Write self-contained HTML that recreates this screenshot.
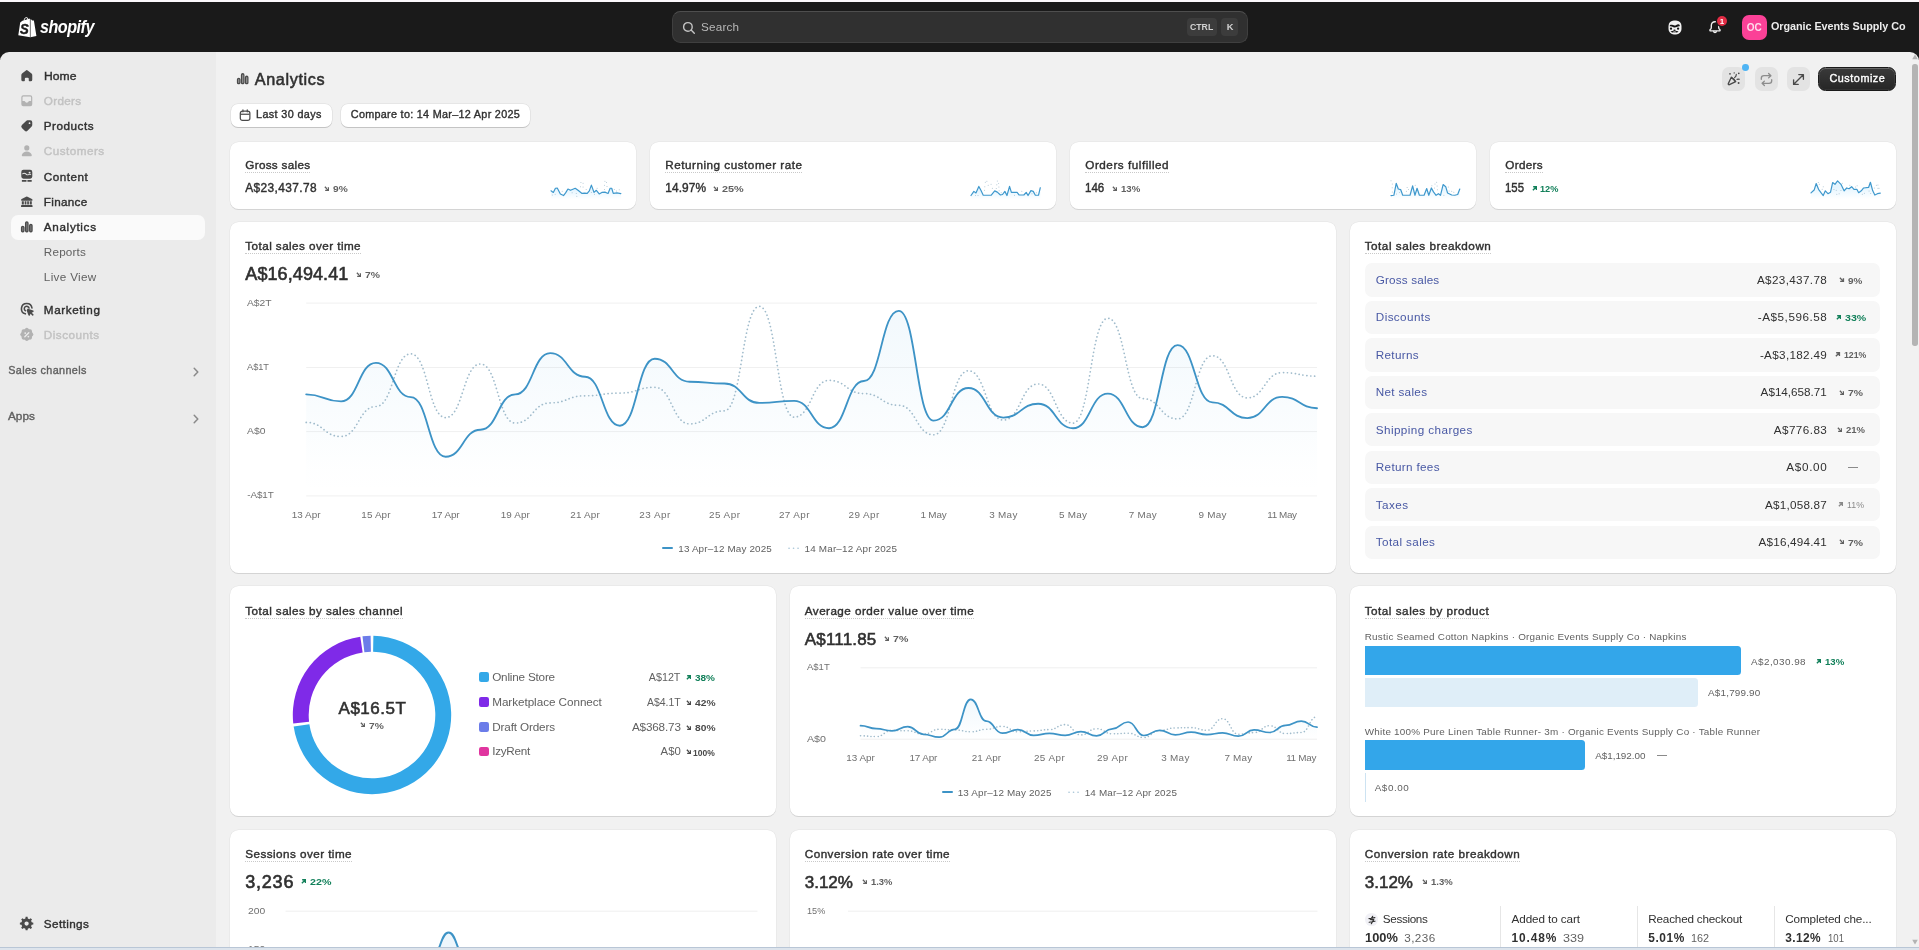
<!DOCTYPE html>
<html lang="en"><head><meta charset="utf-8"><title>Analytics · Organic Events Supply Co · Shopify</title>
<style>
html,body{margin:0;padding:0;}
body{width:1919px;height:950px;overflow:hidden;background:#f1f1f1;will-change:transform;font-family:'Liberation Sans', sans-serif;position:relative;-webkit-font-smoothing:antialiased;}
.t{position:absolute;white-space:pre;}
.card{box-shadow:0 1px 0 0 rgba(0,0,0,.13),0 0 0 0.5px rgba(0,0,0,.06);}
.ul{border-bottom:1px dotted #c9c9c9;}
</style></head>
<body>
<div style="position:absolute;left:0.00px;top:0.00px;width:1919.00px;height:2.00px;background:#fbf8fb;"></div>
<div style="position:absolute;left:0.00px;top:2.00px;width:1919.00px;height:58.00px;background:#1a1a1a;"></div>
<div style="position:absolute;left:0.00px;top:52.00px;width:216.00px;height:898.00px;background:#ebebeb;border-top-left-radius:9px;"></div>
<div style="position:absolute;left:216.00px;top:52.00px;width:1703.00px;height:898.00px;background:#f1f1f1;border-top-right-radius:9px;"></div>
<svg style="position:absolute;left:1911.00px;top:53.00px;" width="8" height="8" viewBox="0 0 8 8"><path d="M1.2 6.2 L4 1.6 L6.8 6.2Z" fill="#b3b3b3"/></svg>
<div style="position:absolute;left:1912.30px;top:64.00px;width:5.40px;height:281.50px;background:#b4b4b4;border-radius:2.7px;"></div>
<svg style="position:absolute;left:1911.00px;top:938.00px;" width="8" height="8" viewBox="0 0 8 8"><path d="M1.2 1.8 L4 6.4 L6.8 1.8Z" fill="#b3b3b3"/></svg>
<div style="position:absolute;left:11.40px;top:214.70px;width:193.30px;height:25.20px;background:#fafafa;border-radius:7.2px;"></div>
<svg style="position:absolute;left:19.20px;top:67.70px;" width="15.6" height="15.6" viewBox="0 0 20 20"><g fill="#4a4a4a"><path d="M8.9 3.1a1.8 1.8 0 0 1 2.2 0l5 3.9c.57.44.9 1.12.9 1.84V15a2 2 0 0 1-2 2h-1.6a.9.9 0 0 1-.9-.9v-2.3a1.3 1.3 0 0 0-1.3-1.3h-2.4a1.3 1.3 0 0 0-1.3 1.3v2.3a.9.9 0 0 1-.9.9H5a2 2 0 0 1-2-2V8.84c0-.72.33-1.4.9-1.84l5-3.9Z"/></g></svg>
<div class="t" style="top:68px;font-size:11.7px;line-height:15.21px;color:#303030;-webkit-text-stroke:0.4px #303030;left:43.80px;transform:scaleX(1.0389);transform-origin:0 50%;">Home</div>
<svg style="position:absolute;left:19.20px;top:92.90px;" width="15.6" height="15.6" viewBox="0 0 20 20"><g fill="#b2b2b2"><path fill-rule="evenodd" d="M5.5 3A2.5 2.5 0 0 0 3 5.5v9A2.5 2.5 0 0 0 5.5 17h9a2.5 2.5 0 0 0 2.5-2.5v-9A2.5 2.5 0 0 0 14.500 3h-9Zm-1 7.200h2.300a.8.8 0 0 1 .75.520 2.600 2.600 0 0 0 4.900 0 .8.8 0 0 1 .75-.52h2.300V5.500a1 1 0 0 0-1-1h-9a1 1 0 0 0-1 1v4.700Z"/></g></svg>
<div class="t" style="top:93px;font-size:11.7px;line-height:15.21px;color:#c2c2c2;-webkit-text-stroke:0.4px #c2c2c2;letter-spacing:0.333px;left:43.80px;">Orders</div>
<svg style="position:absolute;left:19.20px;top:118.10px;" width="15.6" height="15.6" viewBox="0 0 20 20"><g fill="#4a4a4a"><path fill-rule="evenodd" d="M10.900 3a2.500 2.500 0 0 0-1.770.730l-5.400 5.400a2.500 2.500 0 0 0 0 3.540l3.600 3.600a2.500 2.500 0 0 0 3.540 0l5.400-5.400a2.500 2.500 0 0 0 .730-1.770v-3.600a2.500 2.500 0 0 0-2.500-2.500h-3.600Zm2.600 4.700a1.100 1.100 0 1 0 0-2.200 1.100 1.100 0 0 0 0 2.200Z"/></g></svg>
<div class="t" style="top:118px;font-size:11.7px;line-height:15.21px;color:#303030;-webkit-text-stroke:0.4px #303030;letter-spacing:0.511px;left:43.80px;">Products</div>
<svg style="position:absolute;left:19.20px;top:143.00px;" width="15.6" height="15.6" viewBox="0 0 20 20"><g fill="#b2b2b2"><path d="M10 9.600a3.300 3.300 0 1 0 0-6.600 3.300 3.300 0 0 0 0 6.600Z"/><path d="M3.600 15.400c.9-2.700 3.400-4.400 6.400-4.400s5.500 1.700 6.400 4.400c.28.850-.42 1.600-1.300 1.600h-10.200c-.88 0-1.580-.750-1.300-1.600Z"/></g></svg>
<div class="t" style="top:143px;font-size:11.7px;line-height:15.21px;color:#c2c2c2;-webkit-text-stroke:0.4px #c2c2c2;letter-spacing:0.486px;left:43.80px;">Customers</div>
<svg style="position:absolute;left:19.20px;top:167.90px;" width="15.6" height="15.6" viewBox="0 0 20 20"><g fill="#4a4a4a"><path fill-rule="evenodd" d="M5.700 2.400h8.600a2.750 2.750 0 0 1 2.750 2.750v5.800a2.750 2.750 0 0 1-2.750 2.750h-8.600a2.750 2.750 0 0 1-2.750-2.750v-5.800a2.750 2.750 0 0 1 2.750-2.750Zm7.900 2.300a1.250 1.250 0 1 0 0 2.500 1.250 1.250 0 0 0 0-2.500Zm-9.300 3.500c1.500-1.300 3.100-1.200 4.400 0 1.300 1.200 2.500 1.500 3.800.9 1.100-.5 2.100-.3 3 .3v-1.300c-1-.6-2.200-.7-3.500-.1-.9.400-1.600.200-2.500-.7-1.700-1.600-3.700-1.600-5.200-.5v1.400Z"/><path d="M3.700 15.300h5.900v2.200h-5.900zM10.800 15.300h5.500v2.200h-5.500z"/></g></svg>
<div class="t" style="top:169px;font-size:11.7px;line-height:15.21px;color:#303030;-webkit-text-stroke:0.4px #303030;letter-spacing:0.51px;left:43.80px;">Content</div>
<svg style="position:absolute;left:19.20px;top:193.80px;" width="15.6" height="15.6" viewBox="0 0 20 20"><g fill="#4a4a4a"><path d="M9.100 3.500a2 2 0 0 1 1.800 0l5.700 2.900c.5.250.8.750.8 1.300v.1a.9.900 0 0 1-.9.900h-13a.9.900 0 0 1-.9-.9v-.1c0-.550.300-1.050.8-1.300l5.700-2.900Z"/><path d="M3.600 9.300h2.600v4.300h-2.600zM7.300 9.300h2.200v4.300h-2.200zM10.500 9.300h2.200v4.300h-2.200zM13.800 9.300h2.600v4.300h-2.600z"/><path d="M2.600 15.100a1 1 0 0 1 1-1h12.800a1 1 0 0 1 1 1v.8a.8.800 0 0 1-.8.800h-13.200a.8.800 0 0 1-.8-.8v-.800Z"/></g></svg>
<div class="t" style="top:194px;font-size:11.7px;line-height:15.21px;color:#303030;-webkit-text-stroke:0.4px #303030;letter-spacing:0.301px;left:43.80px;">Finance</div>
<svg style="position:absolute;left:19.20px;top:219.10px;" width="15.6" height="15.6" viewBox="0 0 20 20"><g fill="#4a4a4a"><path d="M2.450 11a2.350 2.350 0 0 1 4.700 0v4.200a2.050 2.050 0 0 1-2.050 2.050h-.6a2.050 2.050 0 0 1-2.050-2.050v-4.200ZM7.650 5.100a2.350 2.350 0 0 1 4.700 0v10.100a2.050 2.050 0 0 1-2.050 2.050h-.6a2.050 2.050 0 0 1-2.050-2.050v-10.100ZM12.850 8.300a2.350 2.350 0 0 1 4.700 0v6.900a2.050 2.050 0 0 1-2.050 2.050h-.6a2.050 2.050 0 0 1-2.050-2.050v-6.900Z"/><path fill="#777" d="M3.950 11.200a.85.850 0 0 1 1.700 0v3.900a.6.600 0 0 1-.6.600h-.5a.6.600 0 0 1-.6-.6v-3.900ZM9.150 5.300a.85.850 0 0 1 1.700 0v9.800a.6.600 0 0 1-.6.600h-.5a.6.600 0 0 1-.6-.6v-9.800ZM14.350 8.500a.85.850 0 0 1 1.700 0v6.600a.6.600 0 0 1-.6.600h-.5a.6.600 0 0 1-.6-.6v-6.600Z"/></g></svg>
<div class="t" style="top:219px;font-size:11.7px;line-height:15.21px;color:#303030;-webkit-text-stroke:0.4px #303030;letter-spacing:0.677px;left:43.80px;">Analytics</div>
<div class="t" style="top:244px;font-size:11.7px;line-height:15.21px;color:#616161;letter-spacing:0.194px;left:43.80px;">Reports</div>
<div class="t" style="top:269px;font-size:11.7px;line-height:15.21px;color:#616161;letter-spacing:0.336px;left:43.80px;">Live View</div>
<svg style="position:absolute;left:18.60px;top:301.30px;" width="16.8" height="16.8" viewBox="0 0 20 20"><g fill="#4a4a4a"><path d="M7.57 15.29 A6.3 6.3 0 1 1 15.44 8.32" fill="none" stroke="#4a4a4a" stroke-width="1.900" stroke-linecap="round"/><path d="M7.54 11.58 A2.9 2.9 0 1 1 12.00 8.45" fill="none" stroke="#4a4a4a" stroke-width="1.800" stroke-linecap="round"/><path d="M9.700 10.300c-.25-.7.420-1.370 1.120-1.120l6.100 2.200c.75.270.8 1.300.08 1.640l-1.900.9 2 2a.8.800 0 0 1 0 1.130l-.2.200a.8.800 0 0 1-1.130 0l-2-2-.9 1.900c-.34.720-1.370.670-1.640-.08l-2.200-6.100Z" fill="#4a4a4a"/></g></svg>
<div class="t" style="top:302px;font-size:11.7px;line-height:15.21px;color:#303030;-webkit-text-stroke:0.4px #303030;letter-spacing:0.596px;left:43.80px;">Marketing</div>
<svg style="position:absolute;left:18.20px;top:326.10px;" width="17.6" height="17.6" viewBox="0 0 20 20"><g fill="#b2b2b2"><path fill-rule="evenodd" d="M8.300 2.900a2.300 2.300 0 0 1 3.400 0l.42.460c.2.220.48.340.78.320l.62-.03a2.300 2.300 0 0 1 2.400 2.400l-.03.620c-.02.300.1.580.32.780l.46.420a2.300 2.300 0 0 1 0 3.400l-.46.420c-.22.200-.34.480-.32.780l.03.620a2.300 2.300 0 0 1-2.400 2.400l-.62-.03a1 1 0 0 0-.78.320l-.42.460a2.300 2.300 0 0 1-3.400 0l-.42-.460a1 1 0 0 0-.78-.320l-.62.030a2.300 2.300 0 0 1-2.400-2.400l.03-.620a1 1 0 0 0-.32-.780l-.46-.420a2.300 2.300 0 0 1 0-3.400l.46-.420a1 1 0 0 0 .32-.780l-.03-.620a2.300 2.300 0 0 1 2.400-2.400l.62.030c.3.020.58-.1.780-.320l.42-.460Zm4.500 4.300a.8.800 0 0 1 0 1.130l-4.470 4.470a.8.800 0 0 1-1.130-1.130l4.470-4.470a.8.800 0 0 1 1.130 0Zm-4.600 1.800a1 1 0 1 0 0-2 1 1 0 0 0 0 2Zm3.600 4a1 1 0 1 0 0-2 1 1 0 0 0 0 2Z"/></g></svg>
<div class="t" style="top:327px;font-size:11.7px;line-height:15.21px;color:#c2c2c2;-webkit-text-stroke:0.4px #c2c2c2;letter-spacing:0.496px;left:43.80px;">Discounts</div>
<div class="t" style="top:363px;font-size:10.8px;line-height:14.04px;color:#616161;-webkit-text-stroke:0.37px #616161;letter-spacing:0.382px;left:8.20px;">Sales channels</div>
<div class="t" style="top:409px;font-size:10.8px;line-height:14.04px;color:#616161;-webkit-text-stroke:0.37px #616161;left:8.20px;transform:scaleX(1.0890);transform-origin:0 50%;">Apps</div>
<svg style="position:absolute;left:190.00px;top:366.10px;" width="12" height="12" viewBox="0 0 12 12"><path d="M4.200 2.200 L7.800 6 L4.200 9.800" fill="none" stroke="#8a8a8a" stroke-width="1.500" stroke-linecap="round" stroke-linejoin="round"/></svg>
<svg style="position:absolute;left:190.00px;top:413.20px;" width="12" height="12" viewBox="0 0 12 12"><path d="M4.200 2.200 L7.800 6 L4.200 9.800" fill="none" stroke="#8a8a8a" stroke-width="1.500" stroke-linecap="round" stroke-linejoin="round"/></svg>
<svg style="position:absolute;left:18.40px;top:914.80px;" width="17.2" height="17.2" viewBox="0 0 20 20"><g fill="#4a4a4a"><path fill-rule="evenodd" stroke-linejoin="round" d="M8.58 4.07 L8.89 2.18 L11.11 2.18 L11.42 4.07 L13.19 4.80 L14.74 3.68 L16.32 5.26 L15.20 6.81 L15.93 8.58 L17.82 8.89 L17.82 11.11 L15.93 11.42 L15.20 13.19 L16.32 14.74 L14.74 16.32 L13.19 15.20 L11.42 15.93 L11.11 17.82 L8.89 17.82 L8.58 15.93 L6.81 15.20 L5.26 16.32 L3.68 14.74 L4.80 13.19 L4.07 11.42 L2.18 11.11 L2.18 8.89 L4.07 8.58 L4.80 6.81 L3.68 5.26 L5.26 3.68 L6.81 4.80Z M7.50 10.00 a2.5 2.5 0 1 0 5.0 0 a2.5 2.5 0 1 0 -5.0 0Z"/></g></svg>
<div class="t" style="top:916px;font-size:11.7px;line-height:15.21px;color:#303030;-webkit-text-stroke:0.4px #303030;letter-spacing:0.395px;left:43.80px;">Settings</div>
<svg style="position:absolute;left:17.00px;top:14.50px;" width="21" height="24" viewBox="0 0 21 24"><path d="M3.2 7.600 L5.400 5.800 L6.600 5.500 C6.900 3.800 7.900 2.300 9.400 2.300 C10.300 2.300 10.900 2.900 11.200 3.900 L12.400 3.600 L13.300 4.400 L13.300 22.300 L1.300 20.300 Z" fill="#fff"/><path d="M13.300 4.400 L14.300 4.500 L15.200 5.400 L16.900 5.600 L19.400 20.900 L13.300 22.300 Z" fill="#fff"/><path d="M13.300 4.400 L13.300 22.300" stroke="#1a1a1a" stroke-width=".5"/><path d="M7.400 5.300 C7.600 4.200 8.400 3.100 9.300 3.100 C9.800 3.100 10.200 3.500 10.400 4.200 Z" fill="#1a1a1a"/><text x="0" y="0" font-family="Liberation Sans, sans-serif" font-weight="700" font-style="italic" font-size="14.600" fill="#1a1a1a" stroke="#1a1a1a" stroke-width=".45" transform="translate(3.100,18.500) scale(.9,1)">S</text></svg>
<div class="t" style="top:15px;font-size:18.6px;line-height:24.18px;color:#fff;font-weight:700;letter-spacing:-0.6px;font-style:italic;left:40.30px;transform:scaleX(.87);transform-origin:0 0;">shopify</div>
<div style="position:absolute;left:672.00px;top:11.00px;width:575.80px;height:32.00px;background:#303030;border-radius:8.5px;box-sizing:border-box;border:1px solid #3f3f3f;border-top-color:#4e4e4e;"></div>
<svg style="position:absolute;left:682.00px;top:20.50px;" width="14" height="14" viewBox="0 0 14 14"><circle cx="5.900" cy="5.900" r="4.300" fill="none" stroke="#c4c4c4" stroke-width="1.400"/><path d="M9.100 9.100 L12.300 12.300" stroke="#c4c4c4" stroke-width="1.400" stroke-linecap="round"/></svg>
<div class="t" style="top:19px;font-size:11.7px;line-height:15.21px;color:#b8b8b8;letter-spacing:0.2px;left:701.00px;">Search</div>
<div style="position:absolute;left:1186.90px;top:18.10px;width:29.70px;height:17.50px;background:#3c3c3c;border-radius:4px;"></div>
<div class="t" style="top:21px;font-size:9.3px;line-height:12.09px;color:#d2d2d2;font-weight:700;left:1190.40px;transform:scaleX(0.9356);transform-origin:0 50%;">CTRL</div>
<div style="position:absolute;left:1220.90px;top:18.10px;width:17.50px;height:17.50px;background:#3c3c3c;border-radius:4px;"></div>
<div class="t" style="top:21px;font-size:9.3px;line-height:12.09px;color:#d2d2d2;font-weight:700;left:1226.70px;">K</div>
<svg style="position:absolute;left:1668.00px;top:19.50px;" width="14.2" height="15" viewBox="0 0 14.2 15"><rect x=".5" y=".4" width="13" height="14.100" rx="5.400" ry="5.600" fill="#f2f2f2"/><path d="M1.800 5.200 C3.900 3.800 5.800 6.300 7.900 5.200 C9.400 4.400 10.600 3.800 11.700 4.900 L11.700 6.300 C9.700 5.900 8.200 7.800 6.400 7.500 C4.500 7.200 3.500 5.700 1.800 6.400Z" fill="#161616"/><circle cx="3" cy="8.700" r="1.150" fill="#161616"/><circle cx="10.100" cy="8.700" r="1.150" fill="#161616"/><ellipse cx="6.500" cy="10.200" rx="1.150" ry=".75" fill="#161616"/><path d="M2.500 11.500 C4.300 10.600 8.700 10.600 10.600 11.500 C9.300 13.100 4 13.100 2.500 11.500Z" fill="#161616"/><rect x="5.200" y="11.550" width="2.700" height="1.050" rx=".4" fill="#f2f2f2"/></svg>
<svg style="position:absolute;left:1707.80px;top:20.30px;" width="14" height="14" viewBox="0 0 14 14"><path d="M7 1.700 C4.700 1.700 3.300 3.400 3.300 5.600 L3.300 7.400 C3.300 8.300 2.900 9 2.200 9.600 C1.600 10.100 1.900 10.900 2.700 10.900 L11.300 10.900 C12.100 10.900 12.400 10.100 11.800 9.600 C11.100 9 10.700 8.300 10.700 7.400 L10.700 5.600 C10.700 3.400 9.300 1.700 7 1.700Z" fill="none" stroke="#f1f1f1" stroke-width="1.350" stroke-linejoin="round"/><path d="M5.700 11.300 C5.700 12.900 8.300 12.900 8.300 11.300" fill="none" stroke="#f1f1f1" stroke-width="1.350" stroke-linecap="round"/></svg>
<div style="position:absolute;left:1716.50px;top:15.80px;width:10.60px;height:10.60px;background:#e22c45;border-radius:5.3px;box-shadow:0 0 0 1.200px #1a1a1a;"></div>
<div class="t" style="top:17px;font-size:8px;line-height:10.4px;color:#fff;font-weight:700;left:1719.70px;">1</div>
<div style="position:absolute;left:1742.20px;top:14.90px;width:24.80px;height:25.00px;background:#fb4197;border-radius:7px;"></div>
<div class="t" style="top:21px;font-size:10px;line-height:13.0px;color:#ffdcec;font-weight:700;left:1746.80px;transform:scaleX(1.0000);transform-origin:0 50%;">OC</div>
<div class="t" style="top:19px;font-size:10.8px;line-height:14.04px;color:#ececec;font-weight:700;letter-spacing:-0.048px;left:1771.00px;">Organic Events Supply Co</div>
<svg style="position:absolute;left:235.25px;top:71.30px;" width="15.4" height="15.4" viewBox="0 0 20 20"><g fill="#4a4a4a"><path d="M2.450 11a2.350 2.350 0 0 1 4.700 0v4.200a2.050 2.050 0 0 1-2.050 2.050h-.6a2.050 2.050 0 0 1-2.050-2.050v-4.200ZM7.650 5.100a2.350 2.350 0 0 1 4.700 0v10.100a2.050 2.050 0 0 1-2.050 2.050h-.6a2.050 2.050 0 0 1-2.050-2.050v-10.100ZM12.850 8.300a2.350 2.350 0 0 1 4.700 0v6.900a2.050 2.050 0 0 1-2.050 2.050h-.6a2.050 2.050 0 0 1-2.050-2.050v-6.900Z"/><path fill="#8f8f8f" d="M3.950 11.200a.85.850 0 0 1 1.700 0v3.900a.6.600 0 0 1-.6.600h-.5a.6.600 0 0 1-.6-.6v-3.900ZM9.150 5.300a.85.850 0 0 1 1.700 0v9.800a.6.600 0 0 1-.6.600h-.5a.6.600 0 0 1-.6-.6v-9.800ZM14.350 8.500a.85.850 0 0 1 1.700 0v6.600a.6.600 0 0 1-.6.600h-.5a.6.600 0 0 1-.6-.6v-6.600Z"/></g></svg>
<div class="t" style="top:69px;font-size:16.2px;line-height:21.06px;color:#303030;-webkit-text-stroke:0.55px #303030;letter-spacing:0.652px;left:254.70px;">Analytics</div>
<div style="position:absolute;left:231.00px;top:104.30px;width:101.30px;height:22.80px;background:#fff;border-radius:7px;box-shadow:0 1px 0 0 #c4c4c4,0 0 0 .6px #dcdcdc;"></div>
<svg style="position:absolute;left:238.80px;top:108.90px;" width="12.2" height="12.2" viewBox="0 0 13 13"><rect x="1.400" y="2.300" width="10.200" height="9.800" rx="2.300" fill="none" stroke="#4a4a4a" stroke-width="1.300"/><path d="M1.600 5.600 H11.400" stroke="#4a4a4a" stroke-width="1.300"/><path d="M4.200 1 V3 M8.800 1 V3" stroke="#4a4a4a" stroke-width="1.300" stroke-linecap="round"/></svg>
<div class="t" style="top:107px;font-size:10.8px;line-height:14.04px;color:#303030;-webkit-text-stroke:0.37px #303030;letter-spacing:0.379px;left:256.00px;">Last 30 days</div>
<div style="position:absolute;left:340.80px;top:104.30px;width:189.60px;height:22.80px;background:#fff;border-radius:7px;box-shadow:0 1px 0 0 #c4c4c4,0 0 0 .6px #dcdcdc;"></div>
<div class="t" style="top:107px;font-size:10.8px;line-height:14.04px;color:#303030;-webkit-text-stroke:0.37px #303030;letter-spacing:0.301px;left:350.80px;">Compare to: 14 Mar–12 Apr 2025</div>
<div style="position:absolute;left:1721.70px;top:67.20px;width:23.70px;height:23.60px;background:#e3e3e3;border-radius:7px;"></div>
<div style="position:absolute;left:1754.80px;top:67.20px;width:23.70px;height:23.60px;background:#e3e3e3;border-radius:7px;"></div>
<div style="position:absolute;left:1786.60px;top:67.20px;width:23.70px;height:23.60px;background:#e3e3e3;border-radius:7px;"></div>
<svg style="position:absolute;left:1726.10px;top:71.20px;" width="16" height="16" viewBox="0 0 16 16"><path d="M5.300 6.300 L2.300 12.600 C2 13.300 2.700 14 3.400 13.700 L9.700 10.700 Z" fill="none" stroke="#4a4a4a" stroke-width="1.300" stroke-linejoin="round"/><path d="M5.300 6.300 C7 7 9 9 9.700 10.700" fill="none" stroke="#4a4a4a" stroke-width="1.300"/><circle cx="4" cy="2.800" r=".85" fill="#4a4a4a"/><circle cx="8.200" cy="1.900" r=".7" fill="#4a4a4a"/><circle cx="12.800" cy="2.300" r=".85" fill="#4a4a4a"/><circle cx="13" cy="8.200" r=".8" fill="#4a4a4a"/><circle cx="12.600" cy="12" r=".95" fill="#4a4a4a"/><path d="M8.600 6.600 C9.600 5.800 10.300 4.800 10.300 3.400" fill="none" stroke="#4a4a4a" stroke-width="1.200" stroke-linecap="round"/><path d="M11 8.300 L12.200 8.200" fill="none" stroke="#4a4a4a" stroke-width="1.200" stroke-linecap="round"/></svg>
<div style="position:absolute;left:1742.00px;top:64.20px;width:6.80px;height:6.80px;background:#4fb4f4;border-radius:3.4px;"></div>
<svg style="position:absolute;left:1759.20px;top:71.50px;" width="15" height="15" viewBox="0 0 15 15"><path d="M2.300 7.300 V6.300 C2.300 4.800 3.500 3.700 5 3.700 H11.600 M9.600 1.500 L11.900 3.700 L9.600 5.900" fill="none" stroke="#8c8c8c" stroke-width="1.300" stroke-linecap="round" stroke-linejoin="round"/><path d="M12.700 7.700 V8.700 C12.700 10.200 11.500 11.300 10 11.300 H3.400 M5.400 9.100 L3.100 11.300 L5.400 13.500" fill="none" stroke="#8c8c8c" stroke-width="1.300" stroke-linecap="round" stroke-linejoin="round"/></svg>
<svg style="position:absolute;left:1790.90px;top:71.50px;" width="15" height="15" viewBox="0 0 15 15"><path d="M3 12 L12 3 M7.800 2.600 H12.400 V7.200 M7.200 12.400 H2.600 V7.800" fill="none" stroke="#4a4a4a" stroke-width="1.350" stroke-linecap="round" stroke-linejoin="round"/></svg>
<div style="position:absolute;left:1817.90px;top:67.20px;width:78.10px;height:24.00px;background:#303030;border-radius:7.5px;box-sizing:border-box;border:1px solid #1a1a1a;box-shadow:inset 0 1px 0 0 rgba(255,255,255,.18),inset 0 0 0 1px rgba(255,255,255,.06);background:linear-gradient(#3a3a3a,#262626);"></div>
<div class="t" style="top:71px;font-size:10.8px;line-height:14.04px;color:#fff;-webkit-text-stroke:0.37px #fff;letter-spacing:0.536px;left:1829.50px;">Customize</div>
<div style="position:absolute;left:230.00px;top:141.70px;width:406.00px;height:67.50px;background:#fff;border-radius:8.6px;box-shadow:0 1px 0 0 #d4d4d4,0 0 0 .5px #e3e3e3;"></div>
<div class="t" style="top:157px;font-size:11.7px;line-height:15.21px;color:#303030;-webkit-text-stroke:0.4px #303030;letter-spacing:0.31px;left:245.30px;">Gross sales</div>
<div style="position:absolute;left:245.30px;top:171.80px;width:64.80px;height:1.00px;border-bottom:1px dotted #c9c9c9;height:0;"></div>
<div class="t" style="top:181px;font-size:11.9px;line-height:15.47px;color:#303030;-webkit-text-stroke:0.4px #303030;letter-spacing:0.385px;left:245.30px;">A$23,437.78</div>
<svg style="position:absolute;left:323.80px;top:185.90px;" width="5.2" height="5.2" viewBox="0 0 5.4 5.4"><path d="M.9 .9 L4.300 4.300 M1.200 4.600 H4.600 V1.200" fill="none" stroke="#616161" stroke-width="1.450" stroke-linejoin="miter"/></svg>
<div class="t" style="top:183px;font-size:9.6px;line-height:12.48px;color:#616161;font-weight:700;left:332.70px;transform:scaleX(1.0595);transform-origin:0 50%;">9%</div>
<svg style="position:absolute;left:549.20px;top:170.00px;" width="73.83" height="35" viewBox="0 0 73.83 35"><defs><linearGradient id="sg540" x1="0" y1="0" x2="0" y2="1"><stop offset="0.35" stop-color="#7fd0ff" stop-opacity=".2"/><stop offset=".95" stop-color="#7fd0ff" stop-opacity="0"/></linearGradient></defs><path d="M2.00 20.84 L4.34 22.41 L6.43 18.24 L8.25 17.98 L11.38 23.97 L14.51 25.53 L16.59 22.93 L18.94 19.02 L21.54 20.32 L26.23 18.24 L29.36 20.58 L33.01 23.45 L35.61 23.19 L38.22 23.45 L40.30 20.84 L42.39 15.11 L44.99 22.41 L47.34 20.32 L50.20 23.97 L52.81 22.41 L55.93 22.15 L59.06 23.45 L61.15 18.24 L62.71 18.24 L64.27 23.45 L67.92 22.93 L71.83 23.71 L71.83 30 L2.00 30 Z" fill="url(#sg540)"/><circle cx="31.96" cy="12.51" r=".5" fill="#9ab6c8" fill-opacity=".85"/><circle cx="34.05" cy="13.29" r=".5" fill="#9ab6c8" fill-opacity=".85"/><circle cx="31.44" cy="16.68" r=".5" fill="#9ab6c8" fill-opacity=".85"/><circle cx="34.05" cy="16.94" r=".5" fill="#9ab6c8" fill-opacity=".85"/><circle cx="37.17" cy="19.54" r=".5" fill="#9ab6c8" fill-opacity=".85"/><circle cx="23.10" cy="22.67" r=".5" fill="#9ab6c8" fill-opacity=".85"/><circle cx="27.27" cy="23.45" r=".5" fill="#9ab6c8" fill-opacity=".85"/><circle cx="55.93" cy="11.20" r=".5" fill="#9ab6c8" fill-opacity=".85"/><circle cx="57.50" cy="12.51" r=".5" fill="#9ab6c8" fill-opacity=".85"/><circle cx="55.41" cy="15.37" r=".5" fill="#9ab6c8" fill-opacity=".85"/><circle cx="58.02" cy="16.41" r=".5" fill="#9ab6c8" fill-opacity=".85"/><circle cx="55.41" cy="19.54" r=".5" fill="#9ab6c8" fill-opacity=".85"/><circle cx="48.12" cy="18.24" r=".5" fill="#9ab6c8" fill-opacity=".85"/><circle cx="65.31" cy="19.54" r=".5" fill="#9ab6c8" fill-opacity=".85"/><circle cx="67.40" cy="21.10" r=".5" fill="#9ab6c8" fill-opacity=".85"/><circle cx="70.26" cy="19.80" r=".5" fill="#9ab6c8" fill-opacity=".85"/><circle cx="3.30" cy="25.01" r=".5" fill="#9ab6c8" fill-opacity=".85"/><circle cx="6.17" cy="24.23" r=".5" fill="#9ab6c8" fill-opacity=".85"/><circle cx="13.20" cy="21.37" r=".5" fill="#9ab6c8" fill-opacity=".85"/><circle cx="45.51" cy="24.23" r=".5" fill="#9ab6c8" fill-opacity=".85"/><circle cx="42.39" cy="22.41" r=".5" fill="#9ab6c8" fill-opacity=".85"/><circle cx="27.79" cy="26.32" r=".5" fill="#9ab6c8" fill-opacity=".85"/><path d="M2.00 20.84 L4.34 22.41 L6.43 18.24 L8.25 17.98 L11.38 23.97 L14.51 25.53 L16.59 22.93 L18.94 19.02 L21.54 20.32 L26.23 18.24 L29.36 20.58 L33.01 23.45 L35.61 23.19 L38.22 23.45 L40.30 20.84 L42.39 15.11 L44.99 22.41 L47.34 20.32 L50.20 23.97 L52.81 22.41 L55.93 22.15 L59.06 23.45 L61.15 18.24 L62.71 18.24 L64.27 23.45 L67.92 22.93 L71.83 23.71" fill="none" stroke="#3e98cd" stroke-width="1.200" stroke-linejoin="round" stroke-linecap="round"/></svg>
<div style="position:absolute;left:650.00px;top:141.70px;width:406.00px;height:67.50px;background:#fff;border-radius:8.6px;box-shadow:0 1px 0 0 #d4d4d4,0 0 0 .5px #e3e3e3;"></div>
<div class="t" style="top:157px;font-size:11.7px;line-height:15.21px;color:#303030;-webkit-text-stroke:0.4px #303030;letter-spacing:0.515px;left:665.30px;">Returning customer rate</div>
<div style="position:absolute;left:665.30px;top:171.80px;width:136.70px;height:1.00px;border-bottom:1px dotted #c9c9c9;height:0;"></div>
<div class="t" style="top:181px;font-size:11.9px;line-height:15.47px;color:#303030;-webkit-text-stroke:0.4px #303030;letter-spacing:0.071px;left:665.30px;">14.97%</div>
<svg style="position:absolute;left:713.20px;top:185.90px;" width="5.2" height="5.2" viewBox="0 0 5.4 5.4"><path d="M.9 .9 L4.300 4.300 M1.200 4.600 H4.600 V1.200" fill="none" stroke="#616161" stroke-width="1.450" stroke-linejoin="miter"/></svg>
<div class="t" style="top:183px;font-size:9.6px;line-height:12.48px;color:#616161;font-weight:700;left:722.10px;transform:scaleX(1.1300);transform-origin:0 50%;">25%</div>
<svg style="position:absolute;left:969.20px;top:170.00px;" width="73.31" height="35" viewBox="0 0 73.31 35"><defs><linearGradient id="sg960" x1="0" y1="0" x2="0" y2="1"><stop offset="0.35" stop-color="#7fd0ff" stop-opacity=".2"/><stop offset=".95" stop-color="#7fd0ff" stop-opacity="0"/></linearGradient></defs><path d="M2.00 25.53 L4.87 21.37 L6.95 22.93 L9.82 16.41 L11.90 20.32 L14.25 25.27 L22.06 25.27 L25.71 20.84 L28.32 22.15 L31.44 25.01 L33.53 24.49 L35.87 21.37 L37.96 25.53 L40.56 16.41 L42.39 22.41 L48.12 22.41 L50.20 25.01 L54.89 25.01 L57.24 22.41 L59.06 25.53 L61.93 20.58 L64.27 21.37 L66.36 25.27 L69.48 25.27 L71.31 17.72 L71.31 30 L2.00 30 Z" fill="url(#sg960)"/><circle cx="16.33" cy="12.25" r=".5" fill="#9ab6c8" fill-opacity=".85"/><circle cx="17.89" cy="11.20" r=".5" fill="#9ab6c8" fill-opacity=".85"/><circle cx="19.20" cy="15.37" r=".5" fill="#9ab6c8" fill-opacity=".85"/><circle cx="22.06" cy="14.33" r=".5" fill="#9ab6c8" fill-opacity=".85"/><circle cx="15.81" cy="16.68" r=".5" fill="#9ab6c8" fill-opacity=".85"/><circle cx="15.55" cy="20.32" r=".5" fill="#9ab6c8" fill-opacity=".85"/><circle cx="23.37" cy="18.24" r=".5" fill="#9ab6c8" fill-opacity=".85"/><circle cx="28.32" cy="10.94" r=".5" fill="#9ab6c8" fill-opacity=".85"/><circle cx="29.62" cy="13.55" r=".5" fill="#9ab6c8" fill-opacity=".85"/><circle cx="27.79" cy="14.85" r=".5" fill="#9ab6c8" fill-opacity=".85"/><circle cx="29.88" cy="16.94" r=".5" fill="#9ab6c8" fill-opacity=".85"/><circle cx="27.27" cy="18.50" r=".5" fill="#9ab6c8" fill-opacity=".85"/><circle cx="30.14" cy="20.84" r=".5" fill="#9ab6c8" fill-opacity=".85"/><circle cx="52.81" cy="21.37" r=".5" fill="#9ab6c8" fill-opacity=".85"/><circle cx="45.51" cy="25.27" r=".5" fill="#9ab6c8" fill-opacity=".85"/><circle cx="32.22" cy="22.67" r=".5" fill="#9ab6c8" fill-opacity=".85"/><circle cx="62.97" cy="23.71" r=".5" fill="#9ab6c8" fill-opacity=".85"/><circle cx="67.40" cy="22.67" r=".5" fill="#9ab6c8" fill-opacity=".85"/><circle cx="6.43" cy="25.53" r=".5" fill="#9ab6c8" fill-opacity=".85"/><circle cx="9.03" cy="25.53" r=".5" fill="#9ab6c8" fill-opacity=".85"/><path d="M2.00 25.53 L4.87 21.37 L6.95 22.93 L9.82 16.41 L11.90 20.32 L14.25 25.27 L22.06 25.27 L25.71 20.84 L28.32 22.15 L31.44 25.01 L33.53 24.49 L35.87 21.37 L37.96 25.53 L40.56 16.41 L42.39 22.41 L48.12 22.41 L50.20 25.01 L54.89 25.01 L57.24 22.41 L59.06 25.53 L61.93 20.58 L64.27 21.37 L66.36 25.27 L69.48 25.27 L71.31 17.72" fill="none" stroke="#3e98cd" stroke-width="1.200" stroke-linejoin="round" stroke-linecap="round"/></svg>
<div style="position:absolute;left:1070.00px;top:141.70px;width:406.00px;height:67.50px;background:#fff;border-radius:8.6px;box-shadow:0 1px 0 0 #d4d4d4,0 0 0 .5px #e3e3e3;"></div>
<div class="t" style="top:157px;font-size:11.7px;line-height:15.21px;color:#303030;-webkit-text-stroke:0.4px #303030;letter-spacing:0.529px;left:1085.30px;">Orders fulfilled</div>
<div style="position:absolute;left:1085.30px;top:171.80px;width:83.30px;height:1.00px;border-bottom:1px dotted #c9c9c9;height:0;"></div>
<div class="t" style="top:181px;font-size:11.9px;line-height:15.47px;color:#303030;-webkit-text-stroke:0.4px #303030;left:1085.30px;transform:scaleX(0.9726);transform-origin:0 50%;">146</div>
<svg style="position:absolute;left:1111.80px;top:185.90px;" width="5.2" height="5.2" viewBox="0 0 5.4 5.4"><path d="M.9 .9 L4.300 4.300 M1.200 4.600 H4.600 V1.200" fill="none" stroke="#616161" stroke-width="1.450" stroke-linejoin="miter"/></svg>
<div class="t" style="top:183px;font-size:9.6px;line-height:12.48px;color:#616161;font-weight:700;left:1120.70px;transform:scaleX(1.0050);transform-origin:0 50%;">13%</div>
<svg style="position:absolute;left:1389.20px;top:170.00px;" width="72.79" height="35" viewBox="0 0 72.79 35"><defs><linearGradient id="sg1380" x1="0" y1="0" x2="0" y2="1"><stop offset="0.35" stop-color="#7fd0ff" stop-opacity=".2"/><stop offset=".95" stop-color="#7fd0ff" stop-opacity="0"/></linearGradient></defs><path d="M2.00 25.53 L4.87 25.27 L7.21 13.29 L9.30 19.02 L11.64 19.54 L13.72 25.27 L21.02 25.27 L23.63 15.89 L25.97 25.27 L28.06 18.24 L30.40 25.27 L35.09 25.27 L37.70 18.50 L39.78 25.27 L42.39 17.98 L44.47 21.89 L47.08 25.27 L49.42 23.71 L51.50 25.27 L54.11 14.59 L56.72 16.68 L58.54 22.93 L62.71 25.01 L65.84 25.27 L68.70 24.49 L70.79 19.02 L70.79 30 L2.00 30 Z" fill="url(#sg1380)"/><circle cx="2.00" cy="10.68" r=".5" fill="#9ab6c8" fill-opacity=".85"/><circle cx="3.30" cy="14.07" r=".5" fill="#9ab6c8" fill-opacity=".85"/><circle cx="3.20" cy="17.72" r=".5" fill="#9ab6c8" fill-opacity=".85"/><circle cx="3.30" cy="21.89" r=".5" fill="#9ab6c8" fill-opacity=".85"/><circle cx="18.15" cy="17.46" r=".5" fill="#9ab6c8" fill-opacity=".85"/><circle cx="19.46" cy="19.54" r=".5" fill="#9ab6c8" fill-opacity=".85"/><circle cx="17.37" cy="21.37" r=".5" fill="#9ab6c8" fill-opacity=".85"/><circle cx="26.23" cy="15.37" r=".5" fill="#9ab6c8" fill-opacity=".85"/><circle cx="47.60" cy="12.25" r=".5" fill="#9ab6c8" fill-opacity=".85"/><circle cx="46.03" cy="14.07" r=".5" fill="#9ab6c8" fill-opacity=".85"/><circle cx="42.91" cy="15.63" r=".5" fill="#9ab6c8" fill-opacity=".85"/><circle cx="48.12" cy="15.89" r=".5" fill="#9ab6c8" fill-opacity=".85"/><circle cx="45.51" cy="17.98" r=".5" fill="#9ab6c8" fill-opacity=".85"/><circle cx="48.38" cy="19.80" r=".5" fill="#9ab6c8" fill-opacity=".85"/><circle cx="59.32" cy="16.94" r=".5" fill="#9ab6c8" fill-opacity=".85"/><circle cx="60.10" cy="21.10" r=".5" fill="#9ab6c8" fill-opacity=".85"/><circle cx="62.71" cy="21.37" r=".5" fill="#9ab6c8" fill-opacity=".85"/><circle cx="64.79" cy="22.15" r=".5" fill="#9ab6c8" fill-opacity=".85"/><circle cx="7.47" cy="23.97" r=".5" fill="#9ab6c8" fill-opacity=".85"/><circle cx="10.60" cy="22.41" r=".5" fill="#9ab6c8" fill-opacity=".85"/><circle cx="54.89" cy="25.27" r=".5" fill="#9ab6c8" fill-opacity=".85"/><path d="M2.00 25.53 L4.87 25.27 L7.21 13.29 L9.30 19.02 L11.64 19.54 L13.72 25.27 L21.02 25.27 L23.63 15.89 L25.97 25.27 L28.06 18.24 L30.40 25.27 L35.09 25.27 L37.70 18.50 L39.78 25.27 L42.39 17.98 L44.47 21.89 L47.08 25.27 L49.42 23.71 L51.50 25.27 L54.11 14.59 L56.72 16.68 L58.54 22.93 L62.71 25.01 L65.84 25.27 L68.70 24.49 L70.79 19.02" fill="none" stroke="#3e98cd" stroke-width="1.200" stroke-linejoin="round" stroke-linecap="round"/></svg>
<div style="position:absolute;left:1490.00px;top:141.70px;width:406.00px;height:67.50px;background:#fff;border-radius:8.6px;box-shadow:0 1px 0 0 #d4d4d4,0 0 0 .5px #e3e3e3;"></div>
<div class="t" style="top:157px;font-size:11.7px;line-height:15.21px;color:#303030;-webkit-text-stroke:0.4px #303030;letter-spacing:0.333px;left:1505.30px;">Orders</div>
<div style="position:absolute;left:1505.30px;top:171.80px;width:37.40px;height:1.00px;border-bottom:1px dotted #c9c9c9;height:0;"></div>
<div class="t" style="top:181px;font-size:11.9px;line-height:15.47px;color:#303030;-webkit-text-stroke:0.4px #303030;left:1505.30px;transform:scaleX(0.9575);transform-origin:0 50%;">155</div>
<svg style="position:absolute;left:1531.50px;top:185.90px;" width="5.2" height="5.2" viewBox="0 0 5.4 5.4"><path d="M.9 4.500 L4.300 1.100 M1.200 .800 H4.600 V4.200" fill="none" stroke="#12805a" stroke-width="1.450" stroke-linejoin="miter"/></svg>
<div class="t" style="top:183px;font-size:9.6px;line-height:12.48px;color:#12805a;font-weight:700;left:1540.40px;transform:scaleX(0.9582);transform-origin:0 50%;">12%</div>
<svg style="position:absolute;left:1809.20px;top:170.00px;" width="73.31" height="35" viewBox="0 0 73.31 35"><defs><linearGradient id="sg1800" x1="0" y1="0" x2="0" y2="1"><stop offset="0.35" stop-color="#7fd0ff" stop-opacity=".2"/><stop offset=".95" stop-color="#7fd0ff" stop-opacity="0"/></linearGradient></defs><path d="M2.00 22.93 L5.13 20.06 L7.21 13.55 L9.56 19.28 L12.16 22.93 L14.25 25.53 L16.33 20.84 L18.94 23.71 L21.54 22.15 L23.63 12.51 L25.97 14.33 L28.58 10.94 L31.96 14.33 L35.09 20.84 L37.70 17.98 L40.04 18.76 L42.65 16.68 L44.99 19.28 L47.86 19.28 L49.68 22.67 L52.29 20.84 L54.63 17.98 L59.58 17.46 L61.41 12.25 L63.75 20.84 L65.84 25.01 L68.44 23.71 L71.31 23.19 L71.31 30 L2.00 30 Z" fill="url(#sg1800)"/><circle cx="9.30" cy="12.51" r=".5" fill="#9ab6c8" fill-opacity=".85"/><circle cx="10.34" cy="14.33" r=".5" fill="#9ab6c8" fill-opacity=".85"/><circle cx="14.25" cy="16.68" r=".5" fill="#9ab6c8" fill-opacity=".85"/><circle cx="13.20" cy="19.28" r=".5" fill="#9ab6c8" fill-opacity=".85"/><circle cx="24.93" cy="19.54" r=".5" fill="#9ab6c8" fill-opacity=".85"/><circle cx="27.27" cy="20.32" r=".5" fill="#9ab6c8" fill-opacity=".85"/><circle cx="31.96" cy="20.58" r=".5" fill="#9ab6c8" fill-opacity=".85"/><circle cx="27.79" cy="24.23" r=".5" fill="#9ab6c8" fill-opacity=".85"/><circle cx="30.14" cy="23.71" r=".5" fill="#9ab6c8" fill-opacity=".85"/><circle cx="33.27" cy="13.29" r=".5" fill="#9ab6c8" fill-opacity=".85"/><circle cx="40.82" cy="15.37" r=".5" fill="#9ab6c8" fill-opacity=".85"/><circle cx="48.12" cy="15.63" r=".5" fill="#9ab6c8" fill-opacity=".85"/><circle cx="46.55" cy="16.94" r=".5" fill="#9ab6c8" fill-opacity=".85"/><circle cx="60.10" cy="21.10" r=".5" fill="#9ab6c8" fill-opacity=".85"/><circle cx="61.67" cy="23.45" r=".5" fill="#9ab6c8" fill-opacity=".85"/><circle cx="53.33" cy="24.23" r=".5" fill="#9ab6c8" fill-opacity=".85"/><circle cx="55.41" cy="23.19" r=".5" fill="#9ab6c8" fill-opacity=".85"/><circle cx="67.40" cy="15.37" r=".5" fill="#9ab6c8" fill-opacity=".85"/><circle cx="68.96" cy="15.11" r=".5" fill="#9ab6c8" fill-opacity=".85"/><circle cx="65.31" cy="17.98" r=".5" fill="#9ab6c8" fill-opacity=".85"/><circle cx="68.96" cy="18.24" r=".5" fill="#9ab6c8" fill-opacity=".85"/><circle cx="70.00" cy="18.24" r=".5" fill="#9ab6c8" fill-opacity=".85"/><path d="M2.00 22.93 L5.13 20.06 L7.21 13.55 L9.56 19.28 L12.16 22.93 L14.25 25.53 L16.33 20.84 L18.94 23.71 L21.54 22.15 L23.63 12.51 L25.97 14.33 L28.58 10.94 L31.96 14.33 L35.09 20.84 L37.70 17.98 L40.04 18.76 L42.65 16.68 L44.99 19.28 L47.86 19.28 L49.68 22.67 L52.29 20.84 L54.63 17.98 L59.58 17.46 L61.41 12.25 L63.75 20.84 L65.84 25.01 L68.44 23.71 L71.31 23.19" fill="none" stroke="#3e98cd" stroke-width="1.200" stroke-linejoin="round" stroke-linecap="round"/></svg>
<div style="position:absolute;left:230.00px;top:222.40px;width:1106.20px;height:350.80px;background:#fff;border-radius:8.6px;box-shadow:0 1px 0 0 #d4d4d4,0 0 0 .5px #e3e3e3;"></div>
<div class="t" style="top:238px;font-size:11.7px;line-height:15.21px;color:#303030;-webkit-text-stroke:0.4px #303030;letter-spacing:0.438px;left:245.30px;">Total sales over time</div>
<div style="position:absolute;left:245.30px;top:252.80px;width:115.30px;height:1.00px;border-bottom:1px dotted #c9c9c9;height:0;"></div>
<div class="t" style="top:263px;font-size:18px;line-height:23.4px;color:#303030;-webkit-text-stroke:0.61px #303030;letter-spacing:0.091px;left:245.30px;">A$16,494.41</div>
<svg style="position:absolute;left:356.00px;top:271.50px;" width="5.2" height="5.2" viewBox="0 0 5.4 5.4"><path d="M.9 .9 L4.300 4.300 M1.200 4.600 H4.600 V1.200" fill="none" stroke="#616161" stroke-width="1.450" stroke-linejoin="miter"/></svg>
<div class="t" style="top:269px;font-size:9.6px;line-height:12.48px;color:#616161;font-weight:700;left:364.90px;transform:scaleX(1.0811);transform-origin:0 50%;">7%</div>
<svg style="position:absolute;left:236.00px;top:290.00px;" width="1094" height="230" viewBox="0 0 1094 230"><path d="M70.20 13.10 H1081.00" stroke="#f0f0f0" stroke-width="1"/><path d="M70.20 77.50 H1081.00" stroke="#f0f0f0" stroke-width="1"/><path d="M70.20 141.60 H1081.00" stroke="#f0f0f0" stroke-width="1"/><path d="M70.20 205.90 H1081.00" stroke="#f0f0f0" stroke-width="1"/><defs><linearGradient id="mg" x1="0" y1="0" x2="0" y2="1"><stop offset="0" stop-color="#4aa8e0" stop-opacity=".072"/><stop offset=".62" stop-color="#4aa8e0" stop-opacity=".026"/><stop offset=".86" stop-color="#4aa8e0" stop-opacity=".006"/><stop offset="1" stop-color="#4aa8e0" stop-opacity="0"/></linearGradient></defs><path d="M70.20 104.30 C87.63 104.30 87.63 111.40 105.06 111.40 C122.48 111.40 122.48 72.80 139.91 72.80 C157.34 72.80 157.34 107.10 174.77 107.10 C192.19 107.10 192.19 166.70 209.62 166.70 C227.05 166.70 227.05 139.70 244.48 139.70 C261.90 139.70 261.90 104.30 279.33 104.30 C296.76 104.30 296.76 63.20 314.19 63.20 C331.61 63.20 331.61 86.70 349.04 86.70 C366.47 86.70 366.47 135.70 383.90 135.70 C401.32 135.70 401.32 68.70 418.75 68.70 C436.18 68.70 436.18 91.70 453.61 91.70 C471.03 91.70 471.03 93.50 488.46 93.50 C505.89 93.50 505.89 112.90 523.32 112.90 C540.74 112.90 540.74 110.90 558.17 110.90 C575.60 110.90 575.60 138.20 593.03 138.20 C610.46 138.20 610.46 91.00 627.88 91.00 C645.31 91.00 645.31 20.80 662.74 20.80 C680.17 20.80 680.17 130.60 697.59 130.60 C715.02 130.60 715.02 98.00 732.45 98.00 C749.88 98.00 749.88 127.60 767.30 127.60 C784.73 127.60 784.73 113.70 802.16 113.70 C819.59 113.70 819.59 138.20 837.01 138.20 C854.44 138.20 854.44 103.60 871.87 103.60 C889.30 103.60 889.30 137.20 906.72 137.20 C924.15 137.20 924.15 55.10 941.58 55.10 C959.01 55.10 959.01 112.40 976.43 112.40 C993.86 112.40 993.86 128.10 1011.29 128.10 C1028.72 128.10 1028.72 106.90 1046.14 106.90 C1063.57 106.90 1063.57 118.20 1081.00 118.20 L1081.00 205.90 L70.20 205.90 Z" fill="url(#mg)"/><path d="M70.20 132.40 C87.63 132.40 87.63 146.50 105.06 146.50 C122.48 146.50 122.48 116.50 139.91 116.50 C157.34 116.50 157.34 63.90 174.77 63.90 C192.19 63.90 192.19 127.60 209.62 127.60 C227.05 127.60 227.05 74.00 244.48 74.00 C261.90 74.00 261.90 133.10 279.33 133.10 C296.76 133.10 296.76 112.90 314.19 112.90 C331.61 112.90 331.61 105.80 349.04 105.80 C366.47 105.80 366.47 103.10 383.90 103.10 C401.32 103.10 401.32 97.30 418.75 97.30 C436.18 97.30 436.18 133.90 453.61 133.90 C471.03 133.90 471.03 120.80 488.46 120.80 C505.89 120.80 505.89 16.40 523.32 16.40 C540.74 16.40 540.74 127.10 558.17 127.10 C575.60 127.10 575.60 90.40 593.03 90.40 C610.46 90.40 610.46 103.60 627.88 103.60 C645.31 103.60 645.31 115.30 662.74 115.30 C680.17 115.30 680.17 144.80 697.59 144.80 C715.02 144.80 715.02 80.80 732.45 80.80 C749.88 80.80 749.88 130.10 767.30 130.10 C784.73 130.10 784.73 94.00 802.16 94.00 C819.59 94.00 819.59 133.10 837.01 133.10 C854.44 133.10 854.44 28.30 871.87 28.30 C889.30 28.30 889.30 108.60 906.72 108.60 C924.15 108.60 924.15 128.90 941.58 128.90 C959.01 128.90 959.01 65.70 976.43 65.70 C993.86 65.70 993.86 107.90 1011.29 107.90 C1028.72 107.90 1028.72 82.60 1046.14 82.60 C1063.57 82.60 1063.57 86.20 1081.00 86.20" fill="none" stroke="#a1bccc" stroke-width="1.700" stroke-dasharray="0.1 3.850" stroke-linecap="round"/><path d="M70.20 104.30 C87.63 104.30 87.63 111.40 105.06 111.40 C122.48 111.40 122.48 72.80 139.91 72.80 C157.34 72.80 157.34 107.10 174.77 107.10 C192.19 107.10 192.19 166.70 209.62 166.70 C227.05 166.70 227.05 139.70 244.48 139.70 C261.90 139.70 261.90 104.30 279.33 104.30 C296.76 104.30 296.76 63.20 314.19 63.20 C331.61 63.20 331.61 86.70 349.04 86.70 C366.47 86.70 366.47 135.70 383.90 135.70 C401.32 135.70 401.32 68.70 418.75 68.70 C436.18 68.70 436.18 91.70 453.61 91.70 C471.03 91.70 471.03 93.50 488.46 93.50 C505.89 93.50 505.89 112.90 523.32 112.90 C540.74 112.90 540.74 110.90 558.17 110.90 C575.60 110.90 575.60 138.20 593.03 138.20 C610.46 138.20 610.46 91.00 627.88 91.00 C645.31 91.00 645.31 20.80 662.74 20.80 C680.17 20.80 680.17 130.60 697.59 130.60 C715.02 130.60 715.02 98.00 732.45 98.00 C749.88 98.00 749.88 127.60 767.30 127.60 C784.73 127.60 784.73 113.70 802.16 113.70 C819.59 113.70 819.59 138.20 837.01 138.20 C854.44 138.20 854.44 103.60 871.87 103.60 C889.30 103.60 889.30 137.20 906.72 137.20 C924.15 137.20 924.15 55.10 941.58 55.10 C959.01 55.10 959.01 112.40 976.43 112.40 C993.86 112.40 993.86 128.10 1011.29 128.10 C1028.72 128.10 1028.72 106.90 1046.14 106.90 C1063.57 106.90 1063.57 118.20 1081.00 118.20" fill="none" stroke="#3d93c6" stroke-width="1.850" stroke-linecap="round" stroke-linejoin="round"/></svg>
<div class="t" style="top:297px;font-size:9.9px;line-height:12.87px;color:#707070;left:247.30px;transform:scaleX(1.0420);transform-origin:0 50%;">A$2T</div>
<div class="t" style="top:361px;font-size:9.9px;line-height:12.87px;color:#707070;left:247.30px;transform:scaleX(0.9318);transform-origin:0 50%;">A$1T</div>
<div class="t" style="top:425px;font-size:9.9px;line-height:12.87px;color:#707070;left:247.30px;transform:scaleX(1.0468);transform-origin:0 50%;">A$0</div>
<div class="t" style="top:489px;font-size:9.9px;line-height:12.87px;color:#707070;letter-spacing:-0.102px;left:247.30px;">-A$1T</div>
<div class="t" style="top:509px;font-size:9.9px;line-height:12.87px;color:#707070;letter-spacing:0.037px;left:6.22px;width:600px;text-align:center;">13 Apr</div>
<div class="t" style="top:509px;font-size:9.9px;line-height:12.87px;color:#707070;letter-spacing:0.127px;left:75.97px;width:600px;text-align:center;">15 Apr</div>
<div class="t" style="top:509px;font-size:9.9px;line-height:12.87px;color:#707070;letter-spacing:-0.133px;left:145.55px;width:600px;text-align:center;">17 Apr</div>
<div class="t" style="top:509px;font-size:9.9px;line-height:12.87px;color:#707070;letter-spacing:0.127px;left:215.39px;width:600px;text-align:center;">19 Apr</div>
<div class="t" style="top:509px;font-size:9.9px;line-height:12.87px;color:#707070;letter-spacing:0.188px;left:285.14px;width:600px;text-align:center;">21 Apr</div>
<div class="t" style="top:509px;font-size:9.9px;line-height:12.87px;color:#707070;letter-spacing:0.487px;left:355.00px;width:600px;text-align:center;">23 Apr</div>
<div class="t" style="top:509px;font-size:9.9px;line-height:12.87px;color:#707070;letter-spacing:0.487px;left:424.71px;width:600px;text-align:center;">25 Apr</div>
<div class="t" style="top:509px;font-size:9.9px;line-height:12.87px;color:#707070;letter-spacing:0.408px;left:494.38px;width:600px;text-align:center;">27 Apr</div>
<div class="t" style="top:509px;font-size:9.9px;line-height:12.87px;color:#707070;letter-spacing:0.467px;left:564.12px;width:600px;text-align:center;">29 Apr</div>
<div class="t" style="top:509px;font-size:9.9px;line-height:12.87px;color:#707070;letter-spacing:-0.177px;left:633.50px;width:600px;text-align:center;">1 May</div>
<div class="t" style="top:509px;font-size:9.9px;line-height:12.87px;color:#707070;letter-spacing:0.298px;left:703.45px;width:600px;text-align:center;">3 May</div>
<div class="t" style="top:509px;font-size:9.9px;line-height:12.87px;color:#707070;letter-spacing:0.248px;left:773.14px;width:600px;text-align:center;">5 May</div>
<div class="t" style="top:509px;font-size:9.9px;line-height:12.87px;color:#707070;letter-spacing:0.223px;left:842.84px;width:600px;text-align:center;">7 May</div>
<div class="t" style="top:509px;font-size:9.9px;line-height:12.87px;color:#707070;letter-spacing:0.298px;left:912.58px;width:600px;text-align:center;">9 May</div>
<div class="t" style="top:509px;font-size:9.9px;line-height:12.87px;color:#707070;letter-spacing:-0.391px;left:981.95px;width:600px;text-align:center;">11 May</div>
<div style="position:absolute;left:662.00px;top:547.30px;width:10.80px;height:2.20px;background:#3d93c6;border-radius:1px;"></div>
<div class="t" style="top:543px;font-size:9.9px;line-height:12.87px;color:#616161;letter-spacing:0.139px;left:678.30px;">13 Apr–12 May 2025</div>
<svg style="position:absolute;left:787.00px;top:545.40px;" width="14" height="6" viewBox="0 0 14 6"><path d="M2 3.300 H12" stroke="#a9c6d8" stroke-width="1.600" stroke-dasharray="0.1 4.400" stroke-linecap="round"/></svg>
<div class="t" style="top:543px;font-size:9.9px;line-height:12.87px;color:#616161;letter-spacing:0.171px;left:804.60px;">14 Mar–12 Apr 2025</div>
<div style="position:absolute;left:1349.60px;top:222.40px;width:546.40px;height:350.80px;background:#fff;border-radius:8.6px;box-shadow:0 1px 0 0 #d4d4d4,0 0 0 .5px #e3e3e3;"></div>
<div class="t" style="top:238px;font-size:11.7px;line-height:15.21px;color:#303030;-webkit-text-stroke:0.4px #303030;letter-spacing:0.527px;left:1364.70px;">Total sales breakdown</div>
<div style="position:absolute;left:1364.70px;top:252.80px;width:126.20px;height:1.00px;border-bottom:1px dotted #c9c9c9;height:0;"></div>
<div style="position:absolute;left:1365.00px;top:263.40px;width:515.30px;height:33.30px;background:#f7f7f7;border-radius:7px;"></div>
<div class="t" style="top:272px;font-size:11.7px;line-height:15.21px;color:#4858a4;letter-spacing:0.17px;left:1375.80px;">Gross sales</div>
<div class="t" style="top:272px;font-size:11.7px;line-height:15.21px;color:#303030;letter-spacing:0.36px;right:91.84px;">A$23,437.78</div>
<svg style="position:absolute;left:1839.40px;top:277.30px;" width="5.2" height="5.2" viewBox="0 0 5.4 5.4"><path d="M.9 .9 L4.300 4.300 M1.200 4.600 H4.600 V1.200" fill="none" stroke="#616161" stroke-width="1.450" stroke-linejoin="miter"/></svg>
<div class="t" style="top:275px;font-size:9.6px;line-height:12.48px;color:#616161;font-weight:700;left:1848.30px;transform:scaleX(1.0306);transform-origin:0 50%;">9%</div>
<div style="position:absolute;left:1365.00px;top:300.85px;width:515.30px;height:33.30px;background:#f7f7f7;border-radius:7px;"></div>
<div class="t" style="top:309px;font-size:11.7px;line-height:15.21px;color:#4858a4;letter-spacing:0.396px;left:1375.80px;">Discounts</div>
<div class="t" style="top:309px;font-size:11.7px;line-height:15.21px;color:#303030;letter-spacing:0.531px;right:91.67px;">-A$5,596.58</div>
<svg style="position:absolute;left:1835.95px;top:314.75px;" width="5.2" height="5.2" viewBox="0 0 5.4 5.4"><path d="M.9 4.500 L4.300 1.100 M1.200 .800 H4.600 V4.200" fill="none" stroke="#12805a" stroke-width="1.450" stroke-linejoin="miter"/></svg>
<div class="t" style="top:312px;font-size:9.6px;line-height:12.48px;color:#12805a;font-weight:700;left:1844.85px;transform:scaleX(1.1040);transform-origin:0 50%;">33%</div>
<div style="position:absolute;left:1365.00px;top:338.30px;width:515.30px;height:33.30px;background:#f7f7f7;border-radius:7px;"></div>
<div class="t" style="top:347px;font-size:11.7px;line-height:15.21px;color:#4858a4;letter-spacing:0.31px;left:1375.80px;">Returns</div>
<div class="t" style="top:347px;font-size:11.7px;line-height:15.21px;color:#303030;letter-spacing:0.321px;right:91.88px;">-A$3,182.49</div>
<svg style="position:absolute;left:1835.35px;top:352.20px;" width="5.2" height="5.2" viewBox="0 0 5.4 5.4"><path d="M.9 4.500 L4.300 1.100 M1.200 .800 H4.600 V4.200" fill="none" stroke="#616161" stroke-width="1.450" stroke-linejoin="miter"/></svg>
<div class="t" style="top:349px;font-size:9.6px;line-height:12.48px;color:#616161;font-weight:700;left:1844.25px;transform:scaleX(0.9125);transform-origin:0 50%;">121%</div>
<div style="position:absolute;left:1365.00px;top:375.75px;width:515.30px;height:33.30px;background:#f7f7f7;border-radius:7px;"></div>
<div class="t" style="top:384px;font-size:11.7px;line-height:15.21px;color:#4858a4;letter-spacing:0.308px;left:1375.80px;">Net sales</div>
<div class="t" style="top:384px;font-size:11.7px;line-height:15.21px;color:#303030;letter-spacing:-0.01px;right:92.21px;">A$14,658.71</div>
<svg style="position:absolute;left:1839.05px;top:389.65px;" width="5.2" height="5.2" viewBox="0 0 5.4 5.4"><path d="M.9 .9 L4.300 4.300 M1.200 4.600 H4.600 V1.200" fill="none" stroke="#616161" stroke-width="1.450" stroke-linejoin="miter"/></svg>
<div class="t" style="top:387px;font-size:9.6px;line-height:12.48px;color:#616161;font-weight:700;left:1847.95px;transform:scaleX(1.0811);transform-origin:0 50%;">7%</div>
<div style="position:absolute;left:1365.00px;top:413.20px;width:515.30px;height:33.30px;background:#f7f7f7;border-radius:7px;"></div>
<div class="t" style="top:422px;font-size:11.7px;line-height:15.21px;color:#4858a4;letter-spacing:0.418px;left:1375.80px;">Shipping charges</div>
<div class="t" style="top:422px;font-size:11.7px;line-height:15.21px;color:#303030;letter-spacing:0.422px;right:91.78px;">A$776.83</div>
<svg style="position:absolute;left:1837.05px;top:427.10px;" width="5.2" height="5.2" viewBox="0 0 5.4 5.4"><path d="M.9 .9 L4.300 4.300 M1.200 4.600 H4.600 V1.200" fill="none" stroke="#616161" stroke-width="1.450" stroke-linejoin="miter"/></svg>
<div class="t" style="top:424px;font-size:9.6px;line-height:12.48px;color:#616161;font-weight:700;left:1845.95px;transform:scaleX(0.9894);transform-origin:0 50%;">21%</div>
<div style="position:absolute;left:1365.00px;top:450.65px;width:515.30px;height:33.30px;background:#f7f7f7;border-radius:7px;"></div>
<div class="t" style="top:459px;font-size:11.7px;line-height:15.21px;color:#4858a4;letter-spacing:0.328px;left:1375.80px;">Return fees</div>
<div class="t" style="top:459px;font-size:11.7px;line-height:15.21px;color:#303030;letter-spacing:0.691px;right:91.51px;">A$0.00</div>
<div style="position:absolute;left:1847.80px;top:466.65px;width:10.00px;height:1.30px;background:#8a8a8a;"></div>
<div style="position:absolute;left:1365.00px;top:488.10px;width:515.30px;height:33.30px;background:#f7f7f7;border-radius:7px;"></div>
<div class="t" style="top:497px;font-size:11.7px;line-height:15.21px;color:#4858a4;letter-spacing:0.417px;left:1375.80px;">Taxes</div>
<div class="t" style="top:497px;font-size:11.7px;line-height:15.21px;color:#303030;letter-spacing:0.223px;right:91.98px;">A$1,058.87</div>
<svg style="position:absolute;left:1838.05px;top:502.00px;" width="5.2" height="5.2" viewBox="0 0 5.4 5.4"><path d="M.9 4.500 L4.300 1.100 M1.200 .800 H4.600 V4.200" fill="none" stroke="#8a8a8a" stroke-width="1.450" stroke-linejoin="miter"/></svg>
<div class="t" style="top:499px;font-size:9.6px;line-height:12.48px;color:#8a8a8a;left:1846.95px;transform:scaleX(0.9189);transform-origin:0 50%;">11%</div>
<div style="position:absolute;left:1365.00px;top:525.55px;width:515.30px;height:33.30px;background:#f7f7f7;border-radius:7px;"></div>
<div class="t" style="top:534px;font-size:11.7px;line-height:15.21px;color:#4858a4;letter-spacing:0.388px;left:1375.80px;">Total sales</div>
<div class="t" style="top:534px;font-size:11.7px;line-height:15.21px;color:#303030;letter-spacing:0.19px;right:92.01px;">A$16,494.41</div>
<svg style="position:absolute;left:1839.05px;top:539.45px;" width="5.2" height="5.2" viewBox="0 0 5.4 5.4"><path d="M.9 .9 L4.300 4.300 M1.200 4.600 H4.600 V1.200" fill="none" stroke="#616161" stroke-width="1.450" stroke-linejoin="miter"/></svg>
<div class="t" style="top:537px;font-size:9.6px;line-height:12.48px;color:#616161;font-weight:700;left:1847.95px;transform:scaleX(1.0811);transform-origin:0 50%;">7%</div>
<div style="position:absolute;left:230.00px;top:586.40px;width:546.20px;height:230.00px;background:#fff;border-radius:8.6px;box-shadow:0 1px 0 0 #d4d4d4,0 0 0 .5px #e3e3e3;"></div>
<div style="position:absolute;left:790.00px;top:586.40px;width:546.20px;height:230.00px;background:#fff;border-radius:8.6px;box-shadow:0 1px 0 0 #d4d4d4,0 0 0 .5px #e3e3e3;"></div>
<div style="position:absolute;left:1350.00px;top:586.40px;width:546.20px;height:230.00px;background:#fff;border-radius:8.6px;box-shadow:0 1px 0 0 #d4d4d4,0 0 0 .5px #e3e3e3;"></div>
<div class="t" style="top:603px;font-size:11.7px;line-height:15.21px;color:#303030;-webkit-text-stroke:0.4px #303030;letter-spacing:0.436px;left:245.30px;">Total sales by sales channel</div>
<div style="position:absolute;left:245.30px;top:618.00px;width:157.30px;height:1.00px;border-bottom:1px dotted #c9c9c9;height:0;"></div>
<svg style="position:absolute;left:292.20px;top:634.50px;" width="160" height="160" viewBox="0 0 160 160"><path d="M81.38 0.81 A79.2 79.2 0 1 1 1.65 91.57 L17.38 89.25 A63.3 63.3 0 1 0 81.10 16.71 Z" fill="#33a8e8"/><path d="M1.25 88.42 A79.2 79.2 0 0 1 68.29 1.67 L70.64 17.40 A63.3 63.3 0 0 0 17.06 86.73 Z" fill="#7f2ae8"/><path d="M70.49 1.37 A79.2 79.2 0 0 1 78.62 0.81 L78.90 16.71 A63.3 63.3 0 0 0 72.40 17.16 Z" fill="#6b7ce9"/></svg>
<div class="t" style="top:698px;font-size:17px;line-height:22.1px;color:#303030;-webkit-text-stroke:0.58px #303030;letter-spacing:0.506px;left:72.45px;width:600px;text-align:center;">A$16.5T</div>
<svg style="position:absolute;left:360.30px;top:722.30px;" width="5.2" height="5.2" viewBox="0 0 5.4 5.4"><path d="M.9 .9 L4.300 4.300 M1.200 4.600 H4.600 V1.200" fill="none" stroke="#616161" stroke-width="1.450" stroke-linejoin="miter"/></svg>
<div class="t" style="top:720px;font-size:9.6px;line-height:12.48px;color:#616161;font-weight:700;left:369.00px;transform:scaleX(1.0667);transform-origin:0 50%;">7%</div>
<div style="position:absolute;left:479.20px;top:672.40px;width:9.50px;height:9.50px;background:#33a8e8;border-radius:2.2px;"></div>
<div class="t" style="top:669px;font-size:11.7px;line-height:15.21px;color:#616161;letter-spacing:-0.188px;left:492.20px;">Online Store</div>
<div class="t" style="top:669px;font-size:11.7px;line-height:15.21px;color:#616161;right:1238.10px;transform:scaleX(0.9205);transform-origin:100% 50%;">A$12T</div>
<svg style="position:absolute;left:685.80px;top:674.90px;" width="5.2" height="5.2" viewBox="0 0 5.4 5.4"><path d="M.9 4.500 L4.300 1.100 M1.200 .800 H4.600 V4.200" fill="none" stroke="#12805a" stroke-width="1.450" stroke-linejoin="miter"/></svg>
<div class="t" style="top:672px;font-size:9.6px;line-height:12.48px;color:#12805a;font-weight:700;left:695.00px;transform:scaleX(1.0415);transform-origin:0 50%;">38%</div>
<div style="position:absolute;left:479.20px;top:697.20px;width:9.50px;height:9.50px;background:#7f2ae8;border-radius:2.2px;"></div>
<div class="t" style="top:694px;font-size:11.7px;line-height:15.21px;color:#616161;letter-spacing:-0.042px;left:492.20px;">Marketplace Connect</div>
<div class="t" style="top:694px;font-size:11.7px;line-height:15.21px;color:#616161;right:1238.10px;transform:scaleX(0.8968);transform-origin:100% 50%;">A$4.1T</div>
<svg style="position:absolute;left:685.80px;top:699.70px;" width="5.2" height="5.2" viewBox="0 0 5.4 5.4"><path d="M.9 .9 L4.300 4.300 M1.200 4.600 H4.600 V1.200" fill="none" stroke="#4a4a4a" stroke-width="1.450" stroke-linejoin="miter"/></svg>
<div class="t" style="top:697px;font-size:9.6px;line-height:12.48px;color:#4a4a4a;font-weight:700;left:695.00px;transform:scaleX(1.0675);transform-origin:0 50%;">42%</div>
<div style="position:absolute;left:479.20px;top:722.30px;width:9.50px;height:9.50px;background:#6b7ce9;border-radius:2.2px;"></div>
<div class="t" style="top:719px;font-size:11.7px;line-height:15.21px;color:#616161;letter-spacing:-0.127px;left:492.20px;">Draft Orders</div>
<div class="t" style="top:719px;font-size:11.7px;line-height:15.21px;color:#616161;letter-spacing:-0.15px;right:1238.25px;">A$368.73</div>
<svg style="position:absolute;left:685.80px;top:724.80px;" width="5.2" height="5.2" viewBox="0 0 5.4 5.4"><path d="M.9 .9 L4.300 4.300 M1.200 4.600 H4.600 V1.200" fill="none" stroke="#4a4a4a" stroke-width="1.450" stroke-linejoin="miter"/></svg>
<div class="t" style="top:722px;font-size:9.6px;line-height:12.48px;color:#4a4a4a;font-weight:700;left:695.00px;transform:scaleX(1.0675);transform-origin:0 50%;">80%</div>
<div style="position:absolute;left:479.20px;top:746.60px;width:9.50px;height:9.50px;background:#e0359f;border-radius:2.2px;"></div>
<div class="t" style="top:743px;font-size:11.7px;line-height:15.21px;color:#616161;letter-spacing:-0.254px;left:492.20px;">IzyRent</div>
<div class="t" style="top:743px;font-size:11.7px;line-height:15.21px;color:#616161;right:1238.10px;transform:scaleX(0.9713);transform-origin:100% 50%;">A$0</div>
<svg style="position:absolute;left:685.80px;top:749.10px;" width="5.2" height="5.2" viewBox="0 0 5.4 5.4"><path d="M.9 .9 L4.300 4.300 M1.200 4.600 H4.600 V1.200" fill="none" stroke="#4a4a4a" stroke-width="1.450" stroke-linejoin="miter"/></svg>
<div class="t" style="top:748px;font-size:8.8px;line-height:11.44px;color:#4a4a4a;font-weight:700;left:693.20px;transform:scaleX(0.9689);transform-origin:0 50%;">100%</div>
<div class="t" style="top:603px;font-size:11.7px;line-height:15.21px;color:#303030;-webkit-text-stroke:0.4px #303030;letter-spacing:0.451px;left:804.80px;">Average order value over time</div>
<div style="position:absolute;left:804.80px;top:618.00px;width:169.00px;height:1.00px;border-bottom:1px dotted #c9c9c9;height:0;"></div>
<div class="t" style="top:629px;font-size:17px;line-height:22.1px;color:#303030;-webkit-text-stroke:0.58px #303030;letter-spacing:0.174px;left:804.80px;">A$111.85</div>
<svg style="position:absolute;left:883.60px;top:636.10px;" width="5.2" height="5.2" viewBox="0 0 5.4 5.4"><path d="M.9 .9 L4.300 4.300 M1.200 4.600 H4.600 V1.200" fill="none" stroke="#616161" stroke-width="1.450" stroke-linejoin="miter"/></svg>
<div class="t" style="top:633px;font-size:9.6px;line-height:12.48px;color:#616161;font-weight:700;left:892.50px;transform:scaleX(1.1027);transform-origin:0 50%;">7%</div>
<svg style="position:absolute;left:850.00px;top:655.00px;" width="480" height="95" viewBox="0 0 480 95"><path d="M10.50 12.80 H467.00" stroke="#efefef" stroke-width="1"/><path d="M10.50 84.20 H467.00" stroke="#efefef" stroke-width="1"/><defs><linearGradient id="ag" x1="0" y1="0" x2="0" y2="1"><stop offset="0" stop-color="#4aa8e0" stop-opacity=".08"/><stop offset="1" stop-color="#4aa8e0" stop-opacity="0"/></linearGradient></defs><path d="M10.50 70.70 C18.37 70.70 18.37 73.60 26.24 73.60 C34.11 73.60 34.11 75.80 41.98 75.80 C49.85 75.80 49.85 71.60 57.72 71.60 C65.59 71.60 65.59 79.30 73.47 79.30 C81.34 79.30 81.34 82.20 89.21 82.20 C97.08 82.20 97.08 74.30 104.95 74.30 C112.82 74.30 112.82 44.30 120.69 44.30 C128.56 44.30 128.56 66.10 136.43 66.10 C144.30 66.10 144.30 78.20 152.17 78.20 C160.04 78.20 160.04 74.60 167.91 74.60 C175.78 74.60 175.78 80.30 183.66 80.30 C191.53 80.30 191.53 78.40 199.40 78.40 C207.27 78.40 207.27 80.30 215.14 80.30 C223.01 80.30 223.01 76.60 230.88 76.60 C238.75 76.60 238.75 80.80 246.62 80.80 C254.49 80.80 254.49 73.90 262.36 73.90 C270.23 73.90 270.23 67.00 278.10 67.00 C285.97 67.00 285.97 80.50 293.84 80.50 C301.72 80.50 301.72 75.30 309.59 75.30 C317.46 75.30 317.46 79.90 325.33 79.90 C333.20 79.90 333.20 77.20 341.07 77.20 C348.94 77.20 348.94 79.60 356.81 79.60 C364.68 79.60 364.68 77.90 372.55 77.90 C380.42 77.90 380.42 81.20 388.29 81.20 C396.16 81.20 396.16 74.90 404.03 74.90 C411.91 74.90 411.91 77.50 419.78 77.50 C427.65 77.50 427.65 70.40 435.52 70.40 C443.39 70.40 443.39 66.10 451.26 66.10 C459.13 66.10 459.13 72.20 467.00 72.20 L467.00 84.20 L10.50 84.20 Z" fill="url(#ag)"/><path d="M10.50 80.80 C18.37 80.80 18.37 81.60 26.24 81.60 C34.11 81.60 34.11 75.50 41.98 75.50 C49.85 75.50 49.85 75.80 57.72 75.80 C65.59 75.80 65.59 79.20 73.47 79.20 C81.34 79.20 81.34 74.30 89.21 74.30 C97.08 74.30 97.08 74.90 104.95 74.90 C112.82 74.90 112.82 76.80 120.69 76.80 C128.56 76.80 128.56 74.30 136.43 74.30 C144.30 74.30 144.30 71.30 152.17 71.30 C160.04 71.30 160.04 76.80 167.91 76.80 C175.78 76.80 175.78 75.90 183.66 75.90 C191.53 75.90 191.53 74.60 199.40 74.60 C207.27 74.60 207.27 69.60 215.14 69.60 C223.01 69.60 223.01 79.90 230.88 79.90 C238.75 79.90 238.75 73.70 246.62 73.70 C254.49 73.70 254.49 78.80 262.36 78.80 C270.23 78.80 270.23 78.20 278.10 78.20 C285.97 78.20 285.97 82.50 293.84 82.50 C301.72 82.50 301.72 75.50 309.59 75.50 C317.46 75.50 317.46 72.90 325.33 72.90 C333.20 72.90 333.20 72.60 341.07 72.60 C348.94 72.60 348.94 75.30 356.81 75.30 C364.68 75.30 364.68 63.70 372.55 63.70 C380.42 63.70 380.42 79.20 388.29 79.20 C396.16 79.20 396.16 77.60 404.03 77.60 C411.91 77.60 411.91 70.70 419.78 70.70 C427.65 70.70 427.65 78.60 435.52 78.60 C443.39 78.60 443.39 77.50 451.26 77.50 C459.13 77.50 459.13 61.80 467.00 61.80" fill="none" stroke="#a1bccc" stroke-width="1.550" stroke-dasharray="0.1 3.400" stroke-linecap="round"/><path d="M10.50 70.70 C18.37 70.70 18.37 73.60 26.24 73.60 C34.11 73.60 34.11 75.80 41.98 75.80 C49.85 75.80 49.85 71.60 57.72 71.60 C65.59 71.60 65.59 79.30 73.47 79.30 C81.34 79.30 81.34 82.20 89.21 82.20 C97.08 82.20 97.08 74.30 104.95 74.30 C112.82 74.30 112.82 44.30 120.69 44.30 C128.56 44.30 128.56 66.10 136.43 66.10 C144.30 66.10 144.30 78.20 152.17 78.20 C160.04 78.20 160.04 74.60 167.91 74.60 C175.78 74.60 175.78 80.30 183.66 80.30 C191.53 80.30 191.53 78.40 199.40 78.40 C207.27 78.40 207.27 80.30 215.14 80.30 C223.01 80.30 223.01 76.60 230.88 76.60 C238.75 76.60 238.75 80.80 246.62 80.80 C254.49 80.80 254.49 73.90 262.36 73.90 C270.23 73.90 270.23 67.00 278.10 67.00 C285.97 67.00 285.97 80.50 293.84 80.50 C301.72 80.50 301.72 75.30 309.59 75.30 C317.46 75.30 317.46 79.90 325.33 79.90 C333.20 79.90 333.20 77.20 341.07 77.20 C348.94 77.20 348.94 79.60 356.81 79.60 C364.68 79.60 364.68 77.90 372.55 77.90 C380.42 77.90 380.42 81.20 388.29 81.20 C396.16 81.20 396.16 74.90 404.03 74.90 C411.91 74.90 411.91 77.50 419.78 77.50 C427.65 77.50 427.65 70.40 435.52 70.40 C443.39 70.40 443.39 66.10 451.26 66.10 C459.13 66.10 459.13 72.20 467.00 72.20" fill="none" stroke="#3d93c6" stroke-width="1.700" stroke-linecap="round" stroke-linejoin="round"/></svg>
<div class="t" style="top:661px;font-size:9.9px;line-height:12.87px;color:#707070;left:806.90px;transform:scaleX(0.9615);transform-origin:0 50%;">A$1T</div>
<div class="t" style="top:733px;font-size:9.9px;line-height:12.87px;color:#707070;left:806.90px;transform:scaleX(1.0809);transform-origin:0 50%;">A$0</div>
<div class="t" style="top:752px;font-size:9.9px;line-height:12.87px;color:#707070;letter-spacing:0.037px;left:560.52px;width:600px;text-align:center;">13 Apr</div>
<div class="t" style="top:752px;font-size:9.9px;line-height:12.87px;color:#707070;letter-spacing:-0.133px;left:623.40px;width:600px;text-align:center;">17 Apr</div>
<div class="t" style="top:752px;font-size:9.9px;line-height:12.87px;color:#707070;letter-spacing:0.188px;left:686.53px;width:600px;text-align:center;">21 Apr</div>
<div class="t" style="top:752px;font-size:9.9px;line-height:12.87px;color:#707070;letter-spacing:0.487px;left:749.64px;width:600px;text-align:center;">25 Apr</div>
<div class="t" style="top:752px;font-size:9.9px;line-height:12.87px;color:#707070;letter-spacing:0.467px;left:812.60px;width:600px;text-align:center;">29 Apr</div>
<div class="t" style="top:752px;font-size:9.9px;line-height:12.87px;color:#707070;letter-spacing:0.298px;left:875.48px;width:600px;text-align:center;">3 May</div>
<div class="t" style="top:752px;font-size:9.9px;line-height:12.87px;color:#707070;letter-spacing:0.223px;left:938.40px;width:600px;text-align:center;">7 May</div>
<div class="t" style="top:752px;font-size:9.9px;line-height:12.87px;color:#707070;letter-spacing:-0.291px;left:1001.11px;width:600px;text-align:center;">11 May</div>
<div style="position:absolute;left:942.00px;top:791.30px;width:10.80px;height:2.20px;background:#3d93c6;border-radius:1px;"></div>
<div class="t" style="top:787px;font-size:9.9px;line-height:12.87px;color:#616161;letter-spacing:0.151px;left:957.70px;">13 Apr–12 May 2025</div>
<svg style="position:absolute;left:1067.00px;top:789.40px;" width="14" height="6" viewBox="0 0 14 6"><path d="M2 3.300 H12" stroke="#a9c6d8" stroke-width="1.600" stroke-dasharray="0.1 4.400" stroke-linecap="round"/></svg>
<div class="t" style="top:787px;font-size:9.9px;line-height:12.87px;color:#616161;letter-spacing:0.159px;left:1084.70px;">14 Mar–12 Apr 2025</div>
<div class="t" style="top:603px;font-size:11.7px;line-height:15.21px;color:#303030;-webkit-text-stroke:0.4px #303030;letter-spacing:0.522px;left:1364.70px;">Total sales by product</div>
<div style="position:absolute;left:1364.70px;top:618.00px;width:124.00px;height:1.00px;border-bottom:1px dotted #c9c9c9;height:0;"></div>
<div class="t" style="top:631px;font-size:9.9px;line-height:12.87px;color:#616161;letter-spacing:0.241px;left:1364.70px;">Rustic Seamed Cotton Napkins · Organic Events Supply Co · Napkins</div>
<div style="position:absolute;left:1364.70px;top:645.50px;width:376.60px;height:29.50px;background:#33a6ea;border-radius:0 3.500px 3.500px 0;"></div>
<div class="t" style="top:656px;font-size:9.9px;line-height:12.87px;color:#616161;letter-spacing:0.452px;left:1751.00px;">A$2,030.98</div>
<svg style="position:absolute;left:1815.90px;top:658.70px;" width="5.2" height="5.2" viewBox="0 0 5.4 5.4"><path d="M.9 4.500 L4.300 1.100 M1.200 .800 H4.600 V4.200" fill="none" stroke="#12805a" stroke-width="1.450" stroke-linejoin="miter"/></svg>
<div class="t" style="top:656px;font-size:9.6px;line-height:12.48px;color:#12805a;font-weight:700;left:1824.60px;transform:scaleX(1.0050);transform-origin:0 50%;">13%</div>
<div style="position:absolute;left:1364.70px;top:677.50px;width:333.50px;height:29.50px;background:#dfeef8;border-radius:0 3.500px 3.500px 0;"></div>
<div class="t" style="top:687px;font-size:9.9px;line-height:12.87px;color:#616161;letter-spacing:0.185px;left:1708.10px;">A$1,799.90</div>
<div class="t" style="top:726px;font-size:9.9px;line-height:12.87px;color:#616161;letter-spacing:0.235px;left:1364.70px;">White 100% Pure Linen Table Runner- 3m · Organic Events Supply Co · Table Runner</div>
<div style="position:absolute;left:1364.70px;top:740.20px;width:220.60px;height:29.60px;background:#33a6ea;border-radius:0 3.500px 3.500px 0;"></div>
<div class="t" style="top:750px;font-size:9.9px;line-height:12.87px;color:#616161;letter-spacing:-0.048px;left:1595.30px;">A$1,192.00</div>
<div style="position:absolute;left:1657.40px;top:754.70px;width:10.00px;height:1.30px;background:#8a8a8a;"></div>
<div style="position:absolute;left:1364.70px;top:772.50px;width:1.50px;height:29.30px;background:#cde3f2;"></div>
<div class="t" style="top:782px;font-size:9.9px;line-height:12.87px;color:#616161;letter-spacing:0.558px;left:1374.70px;">A$0.00</div>
<div style="position:absolute;left:230.00px;top:829.60px;width:546.00px;height:140.00px;background:#fff;border-radius:8.6px;box-shadow:0 1px 0 0 #d4d4d4,0 0 0 .5px #e3e3e3;"></div>
<div style="position:absolute;left:790.00px;top:829.60px;width:546.00px;height:140.00px;background:#fff;border-radius:8.6px;box-shadow:0 1px 0 0 #d4d4d4,0 0 0 .5px #e3e3e3;"></div>
<div style="position:absolute;left:1350.00px;top:829.60px;width:546.00px;height:140.00px;background:#fff;border-radius:8.6px;box-shadow:0 1px 0 0 #d4d4d4,0 0 0 .5px #e3e3e3;"></div>
<div class="t" style="top:846px;font-size:11.7px;line-height:15.21px;color:#303030;-webkit-text-stroke:0.4px #303030;letter-spacing:0.445px;left:245.30px;">Sessions over time</div>
<div style="position:absolute;left:245.30px;top:860.90px;width:106.30px;height:1.00px;border-bottom:1px dotted #c9c9c9;height:0;"></div>
<div class="t" style="top:871px;font-size:18px;line-height:23.4px;color:#303030;-webkit-text-stroke:0.61px #303030;letter-spacing:0.763px;left:245.30px;">3,236</div>
<svg style="position:absolute;left:301.10px;top:878.80px;" width="5.2" height="5.2" viewBox="0 0 5.4 5.4"><path d="M.9 4.500 L4.300 1.100 M1.200 .800 H4.600 V4.200" fill="none" stroke="#12805a" stroke-width="1.450" stroke-linejoin="miter"/></svg>
<div class="t" style="top:876px;font-size:9.6px;line-height:12.48px;color:#12805a;font-weight:700;left:310.00px;transform:scaleX(1.1144);transform-origin:0 50%;">22%</div>
<div class="t" style="top:905px;font-size:9.9px;line-height:12.87px;color:#707070;left:247.50px;transform:scaleX(1.0434);transform-origin:0 50%;">200</div>
<div class="t" style="top:943px;font-size:9.9px;line-height:12.87px;color:#707070;left:247.50px;transform:scaleX(1.0434);transform-origin:0 50%;">150</div>
<svg style="position:absolute;left:230.00px;top:890.00px;" width="546" height="60" viewBox="0 0 546 60"><path d="M55.500 21.200 H527.500" stroke="#efefef" stroke-width="1"/><path d="M202.20 66.00 C210.40 66.00 210.40 42.50 218.60 42.50 C226.80 42.50 226.80 66.00 235.00 66.00 Z" fill="#4aa8e0" fill-opacity=".10"/><path d="M202.20 66.00 C210.40 66.00 210.40 42.50 218.60 42.50 C226.80 42.50 226.80 66.00 235.00 66.00" fill="none" stroke="#3d93c6" stroke-width="2"/></svg>
<div class="t" style="top:846px;font-size:11.7px;line-height:15.21px;color:#303030;-webkit-text-stroke:0.4px #303030;letter-spacing:0.457px;left:804.80px;">Conversion rate over time</div>
<div style="position:absolute;left:804.80px;top:860.90px;width:144.80px;height:1.00px;border-bottom:1px dotted #c9c9c9;height:0;"></div>
<div class="t" style="top:872px;font-size:17px;line-height:22.1px;color:#303030;-webkit-text-stroke:0.58px #303030;letter-spacing:-0.026px;left:804.80px;">3.12%</div>
<svg style="position:absolute;left:861.80px;top:878.80px;" width="5.2" height="5.2" viewBox="0 0 5.4 5.4"><path d="M.9 .9 L4.300 4.300 M1.200 4.600 H4.600 V1.200" fill="none" stroke="#616161" stroke-width="1.450" stroke-linejoin="miter"/></svg>
<div class="t" style="top:876px;font-size:9.6px;line-height:12.48px;color:#616161;font-weight:700;left:870.70px;transform:scaleX(0.9783);transform-origin:0 50%;">1.3%</div>
<div class="t" style="top:905px;font-size:9.9px;line-height:12.87px;color:#707070;left:806.90px;transform:scaleX(0.9258);transform-origin:0 50%;">15%</div>
<svg style="position:absolute;left:790.00px;top:890.00px;" width="546" height="60" viewBox="0 0 546 60"><path d="M58 21.200 H527.500" stroke="#efefef" stroke-width="1"/></svg>
<div class="t" style="top:846px;font-size:11.7px;line-height:15.21px;color:#303030;-webkit-text-stroke:0.4px #303030;letter-spacing:0.507px;left:1364.70px;">Conversion rate breakdown</div>
<div style="position:absolute;left:1364.70px;top:860.90px;width:155.10px;height:1.00px;border-bottom:1px dotted #c9c9c9;height:0;"></div>
<div class="t" style="top:872px;font-size:17px;line-height:22.1px;color:#303030;-webkit-text-stroke:0.58px #303030;letter-spacing:0.024px;left:1364.70px;">3.12%</div>
<svg style="position:absolute;left:1421.70px;top:878.80px;" width="5.2" height="5.2" viewBox="0 0 5.4 5.4"><path d="M.9 .9 L4.300 4.300 M1.200 4.600 H4.600 V1.200" fill="none" stroke="#616161" stroke-width="1.450" stroke-linejoin="miter"/></svg>
<div class="t" style="top:876px;font-size:9.6px;line-height:12.48px;color:#616161;font-weight:700;left:1430.60px;transform:scaleX(0.9920);transform-origin:0 50%;">1.3%</div>
<div style="position:absolute;left:1500.00px;top:905.60px;width:1.00px;height:60.00px;background:#e6e6e6;"></div>
<div style="position:absolute;left:1636.90px;top:905.60px;width:1.00px;height:60.00px;background:#e6e6e6;"></div>
<div style="position:absolute;left:1774.00px;top:905.60px;width:1.00px;height:60.00px;background:#e6e6e6;"></div>
<div style="position:absolute;left:1365.20px;top:913.40px;width:12.60px;height:12.60px;background:#f1f1f6;border-radius:6.3px;"></div>
<svg style="position:absolute;left:1366.50px;top:914.70px;" width="10" height="10" viewBox="0 0 10 10"><path d="M5.700 1.300 L3.600 4.600 H6.800 L4.300 8.700 M2 3.600 L7.900 2.600 M2.100 7.200 L8 6.200" fill="none" stroke="#303030" stroke-width="1.150" stroke-linecap="round" stroke-linejoin="round"/></svg>
<div class="t" style="top:911px;font-size:11.7px;line-height:15.21px;color:#303030;letter-spacing:-0.348px;left:1382.80px;">Sessions</div>
<div class="t" style="top:931px;font-size:11.9px;line-height:15.47px;color:#303030;font-weight:700;left:1365.20px;transform:scaleX(1.0782);transform-origin:0 50%;">100%</div>
<div class="t" style="top:930px;font-size:11.7px;line-height:15.21px;color:#616161;letter-spacing:0.438px;left:1404.20px;">3,236</div>
<div class="t" style="top:911px;font-size:11.7px;line-height:15.21px;color:#303030;letter-spacing:-0.078px;left:1511.50px;">Added to cart</div>
<div class="t" style="top:931px;font-size:11.9px;line-height:15.47px;color:#303030;font-weight:700;letter-spacing:0.891px;left:1511.50px;">10.48%</div>
<div class="t" style="top:930px;font-size:11.7px;line-height:15.21px;color:#616161;left:1562.90px;transform:scaleX(1.0761);transform-origin:0 50%;">339</div>
<div class="t" style="top:911px;font-size:11.7px;line-height:15.21px;color:#303030;letter-spacing:-0.188px;left:1648.30px;">Reached checkout</div>
<div class="t" style="top:931px;font-size:11.9px;line-height:15.47px;color:#303030;font-weight:700;letter-spacing:0.57px;left:1648.30px;">5.01%</div>
<div class="t" style="top:930px;font-size:11.7px;line-height:15.21px;color:#616161;left:1690.90px;transform:scaleX(0.9275);transform-origin:0 50%;">162</div>
<div class="t" style="top:911px;font-size:11.7px;line-height:15.21px;color:#303030;letter-spacing:-0.131px;left:1785.30px;">Completed che...</div>
<div class="t" style="top:931px;font-size:11.9px;line-height:15.47px;color:#303030;font-weight:700;letter-spacing:0.37px;left:1785.30px;">3.12%</div>
<div class="t" style="top:930px;font-size:11.7px;line-height:15.21px;color:#616161;left:1827.90px;transform:scaleX(0.8199);transform-origin:0 50%;">101</div>
<div style="position:absolute;left:0.00px;top:946.60px;width:1919.00px;height:3.40px;background:#dde4ec;border-top:1px solid #b9c6d6;box-sizing:border-box;"></div>
</body></html>
